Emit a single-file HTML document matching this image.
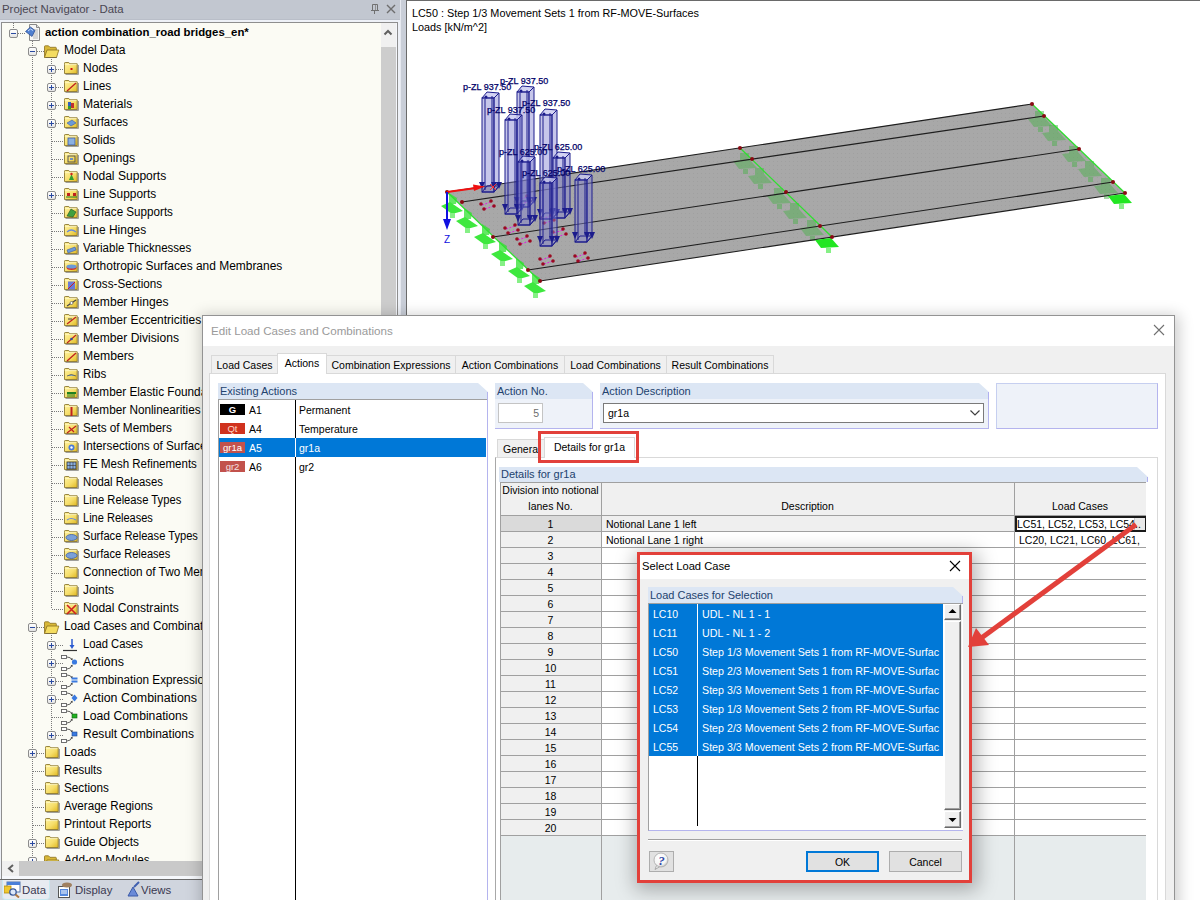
<!DOCTYPE html>
<html><head><meta charset="utf-8"><style>
html,body{margin:0;padding:0;}
body{width:1200px;height:900px;position:relative;overflow:hidden;background:#fff;font-family:"Liberation Sans", sans-serif;}
.t{position:absolute;white-space:nowrap;font-family:"Liberation Sans", sans-serif;}
.r{position:absolute;box-sizing:border-box;}
.clip{position:absolute;overflow:hidden;}
svg{position:absolute;}
</style></head><body>
<div class="r" style="left:0px;top:0px;width:400px;height:20px;background:#c2c7d0;border-bottom:1px solid #b9bec8"></div><div class="t" style="left:2px;top:4.35px;font-size:11.4px;line-height:11.4px;color:#4a4652;font-weight:400;">Project Navigator - Data</div><svg style="left:370px;top:3px" width="10" height="12"><path d="M2.5 1.5H7.5V7.5H2.5Z" fill="none" stroke="#707070"/><path d="M5.5 2V7" stroke="#909090"/><path d="M1 7.5H9" stroke="#707070"/><path d="M4.5 8V11" stroke="#707070"/></svg><svg style="left:386px;top:4px" width="10" height="10"><path d="M1 1L9 9M9 1L1 9" stroke="#6e6e6e" stroke-width="1.4"/></svg><div class="r" style="left:0px;top:20px;width:400px;height:860px;background:#eef1f7"></div><div class="r" style="left:1px;top:22px;width:397px;height:858px;border:1px solid #8e8e8e;background:#fbfbf4"></div><div class="r" style="left:381px;top:23px;width:15px;height:24px;background:#f0f0f0"></div><svg style="left:382px;top:27px" width="12" height="10"><path d="M2.5 7.5L6 4L9.5 7.5" stroke="#606060" stroke-width="2" fill="none"/></svg><div class="r" style="left:381px;top:47px;width:15px;height:813px;background:#cdcdcd"></div><div class="r" style="left:396px;top:23px;width:1px;height:856px;background:#f4f6fb"></div><div class="r" style="left:400px;top:0px;width:6px;height:900px;background:#c9ced8;border-left:1px solid #e6e9f0"></div><div class="r" style="left:2px;top:861px;width:379px;height:15px;background:#c9c9c9"></div><div class="r" style="left:2px;top:861px;width:17px;height:15px;background:#f0f0f0"></div><svg style="left:6px;top:863px" width="10" height="11"><path d="M7 2L3 5.5L7 9" stroke="#606060" stroke-width="2" fill="none"/></svg><div class="r" style="left:381px;top:861px;width:15px;height:15px;background:#f0f0f0"></div><div class="r" style="left:2px;top:876px;width:395px;height:3px;background:#f6f8fc"></div><div class="r" style="left:0px;top:879px;width:400px;height:21px;background:#d0d5de;border-top:1px solid #6a6a6a"></div><div class="r" style="left:2px;top:880px;width:48px;height:20px;background:#e8ebf1;border:1px solid #c8e8f0;border-top:none;border-radius:0 0 4px 4px"></div><svg style="left:4px;top:881px" width="17" height="17"><rect x="3" y="1" width="13" height="10" fill="#fff" stroke="#5577aa"/><rect x="3" y="1" width="13" height="3" fill="#4a7fd8"/><rect x="0" y="5" width="7" height="7" fill="#f0c830" stroke="#b08a10" stroke-width="0.8"/><circle cx="9" cy="11" r="3.2" fill="#dde8f8" stroke="#3a5a9a" stroke-width="1.3"/><path d="M11.5 13.5L15 16.5" stroke="#b07840" stroke-width="2"/></svg><div class="t" style="left:22px;top:885.35px;font-size:11.4px;line-height:11.4px;color:#3a3850;font-weight:400;">Data</div><svg style="left:57px;top:881px" width="17" height="17"><rect x="1.5" y="5.5" width="11" height="11" fill="#fff" stroke="#555"/><rect x="3" y="8" width="8" height="7" fill="#5588dd"/><path d="M4 10h6M4 12h6" stroke="#fff"/><ellipse cx="10" cy="4" rx="5" ry="2.5" fill="#a08060"/></svg><div class="t" style="left:75px;top:885.35px;font-size:11.4px;line-height:11.4px;color:#3a3850;font-weight:400;">Display</div><svg style="left:125px;top:881px" width="17" height="17"><path d="M3 15L8 6L13 15Z" fill="#6a8ad8" stroke="#3a5aa8"/><path d="M9 6L14 1" stroke="#4060b0" stroke-width="2"/></svg><div class="t" style="left:141px;top:885.35px;font-size:11.4px;line-height:11.4px;color:#3a3850;font-weight:400;">Views</div><div class="clip" style="left:2px;top:23px;width:379px;height:838px"><div style="position:absolute;left:-2px;top:-23px;width:400px;height:900px"><div class="r" style="left:13px;top:23px;width:1px;height:6px;background:repeating-linear-gradient(#7a7a7a 0 1px,transparent 1px 2px)"></div><div class="r" style="left:32px;top:41px;width:1px;height:820px;background:repeating-linear-gradient(#7a7a7a 0 1px,transparent 1px 2px)"></div><div class="r" style="left:51px;top:59px;width:1px;height:550px;background:repeating-linear-gradient(#7a7a7a 0 1px,transparent 1px 2px)"></div><div class="r" style="left:51px;top:653px;width:1px;height:81px;background:repeating-linear-gradient(#7a7a7a 0 1px,transparent 1px 2px)"></div><div class="r" style="left:51px;top:635px;width:1px;height:18px;background:repeating-linear-gradient(#7a7a7a 0 1px,transparent 1px 2px)"></div><div class="r" style="left:14px;top:33px;width:11px;height:1px;background:repeating-linear-gradient(90deg,#7a7a7a 0 1px,transparent 1px 2px)"></div><div class="r" style="left:9px;top:29px;width:9px;height:9px;border:1px solid #8c8c8c;border-radius:2px;background:linear-gradient(#fff,#e4e4e4)"></div><div class="r" style="left:11px;top:33px;width:5px;height:1px;background:#2a4aa0"></div><svg style="left:25px;top:24px" width="17" height="17"><path d="M4.5 0.5H11.5L14.5 3.5V16.5H4.5Z" fill="#f6f6f6" stroke="#8a8a8a"/><path d="M11.5 0.5V3.5H14.5" fill="#e0e0e0" stroke="#8a8a8a"/><path d="M8 6h5M8 8h5M8 10h5M8 12h5M8 14h5" stroke="#b4b4b4"/><path d="M0.5 7.5L5.5 3L10 6.5L7 12.5Z" fill="#4f7fd0" stroke="#2a4a90" stroke-width="0.7"/><path d="M3 7L5.5 5L8 6.5" stroke="#d8e6ff" stroke-width="0.9" fill="none"/></svg><div class="t" style="left:45px;top:25.84px;font-size:12px;line-height:12px;color:#000;font-weight:400;"><b style="font-size:11.4px">action combination_road bridges_en*</b></div><div class="r" style="left:33px;top:51px;width:11px;height:1px;background:repeating-linear-gradient(90deg,#7a7a7a 0 1px,transparent 1px 2px)"></div><div class="r" style="left:28px;top:47px;width:9px;height:9px;border:1px solid #8c8c8c;border-radius:2px;background:linear-gradient(#fff,#e4e4e4)"></div><div class="r" style="left:30px;top:51px;width:5px;height:1px;background:#2a4aa0"></div><svg style="left:43px;top:45px" width="17" height="13" viewBox="0 0 17 13"><path d="M1.5 12.5V1.5Q1.5 0.8 2.2 0.8H5.5L7 2.3H12.5Q13.3 2.3 13.3 3V5" fill="#d8b838" stroke="#8a7020" stroke-width="0.8"/><path d="M1.5 12.5L4 5H15.8L13.5 12.5Z" fill="#f4dc60" stroke="#8a7020" stroke-width="0.8"/><path d="M2.5 12.8H14" stroke="#404040" stroke-opacity="0.5"/></svg><div class="t" style="left:64px;top:43.84px;font-size:12px;line-height:12px;color:#000;font-weight:400;transform:scaleX(1.002);transform-origin:0 0">Model Data</div><div class="r" style="left:52px;top:69px;width:11px;height:1px;background:repeating-linear-gradient(90deg,#7a7a7a 0 1px,transparent 1px 2px)"></div><div class="r" style="left:47px;top:65px;width:9px;height:9px;border:1px solid #8c8c8c;border-radius:2px;background:linear-gradient(#fff,#e4e4e4)"></div><div class="r" style="left:49px;top:69px;width:5px;height:1px;background:#2a4aa0"></div><div class="r" style="left:51px;top:67px;width:1px;height:5px;background:#2a4aa0"></div><svg style="left:64px;top:62px" width="15" height="13" viewBox="0 0 15 13"><defs><linearGradient id="fg" x1="0" y1="0" x2="1" y2="1"><stop offset="0" stop-color="#fff3a0"/><stop offset="0.55" stop-color="#f6de6a"/><stop offset="1" stop-color="#e0b820"/></linearGradient></defs><path d="M1.5 12.2H14.2V3" stroke="#303030" stroke-opacity="0.6" stroke-width="1.1" fill="none"/><path d="M0.5 2.5V1.2Q0.5 0.5 1.2 0.5H4.8L5.8 1.8H13.2V11.5H0.5Z" fill="url(#fg)" stroke="#8c7830" stroke-width="0.9"/><path d="M1.2 2.6H12.6" stroke="#fff8c8" stroke-width="0.8"/><rect x="6.5" y="6" width="2" height="2" fill="#d01010"/></svg><div class="t" style="left:83px;top:61.84px;font-size:12px;line-height:12px;color:#000;font-weight:400;transform:scaleX(1.006);transform-origin:0 0">Nodes</div><div class="r" style="left:52px;top:87px;width:11px;height:1px;background:repeating-linear-gradient(90deg,#7a7a7a 0 1px,transparent 1px 2px)"></div><div class="r" style="left:47px;top:83px;width:9px;height:9px;border:1px solid #8c8c8c;border-radius:2px;background:linear-gradient(#fff,#e4e4e4)"></div><div class="r" style="left:49px;top:87px;width:5px;height:1px;background:#2a4aa0"></div><div class="r" style="left:51px;top:85px;width:1px;height:5px;background:#2a4aa0"></div><svg style="left:64px;top:80px" width="15" height="13" viewBox="0 0 15 13"><defs><linearGradient id="fg" x1="0" y1="0" x2="1" y2="1"><stop offset="0" stop-color="#fff3a0"/><stop offset="0.55" stop-color="#f6de6a"/><stop offset="1" stop-color="#e0b820"/></linearGradient></defs><path d="M1.5 12.2H14.2V3" stroke="#303030" stroke-opacity="0.6" stroke-width="1.1" fill="none"/><path d="M0.5 2.5V1.2Q0.5 0.5 1.2 0.5H4.8L5.8 1.8H13.2V11.5H0.5Z" fill="url(#fg)" stroke="#8c7830" stroke-width="0.9"/><path d="M1.2 2.6H12.6" stroke="#fff8c8" stroke-width="0.8"/><path d="M3 11L12 3" stroke="#c02020" stroke-width="1.3"/></svg><div class="t" style="left:83px;top:79.84px;font-size:12px;line-height:12px;color:#000;font-weight:400;transform:scaleX(0.983);transform-origin:0 0">Lines</div><div class="r" style="left:52px;top:105px;width:11px;height:1px;background:repeating-linear-gradient(90deg,#7a7a7a 0 1px,transparent 1px 2px)"></div><div class="r" style="left:47px;top:101px;width:9px;height:9px;border:1px solid #8c8c8c;border-radius:2px;background:linear-gradient(#fff,#e4e4e4)"></div><div class="r" style="left:49px;top:105px;width:5px;height:1px;background:#2a4aa0"></div><div class="r" style="left:51px;top:103px;width:1px;height:5px;background:#2a4aa0"></div><svg style="left:64px;top:98px" width="15" height="13" viewBox="0 0 15 13"><defs><linearGradient id="fg" x1="0" y1="0" x2="1" y2="1"><stop offset="0" stop-color="#fff3a0"/><stop offset="0.55" stop-color="#f6de6a"/><stop offset="1" stop-color="#e0b820"/></linearGradient></defs><path d="M1.5 12.2H14.2V3" stroke="#303030" stroke-opacity="0.6" stroke-width="1.1" fill="none"/><path d="M0.5 2.5V1.2Q0.5 0.5 1.2 0.5H4.8L5.8 1.8H13.2V11.5H0.5Z" fill="url(#fg)" stroke="#8c7830" stroke-width="0.9"/><path d="M1.2 2.6H12.6" stroke="#fff8c8" stroke-width="0.8"/><rect x="4" y="4" width="3" height="4" fill="#3060c0"/><rect x="7" y="5" width="3" height="5" fill="#c03030"/><rect x="4" y="8" width="3" height="3" fill="#30a030"/></svg><div class="t" style="left:83px;top:97.84px;font-size:12px;line-height:12px;color:#000;font-weight:400;transform:scaleX(1.011);transform-origin:0 0">Materials</div><div class="r" style="left:52px;top:123px;width:11px;height:1px;background:repeating-linear-gradient(90deg,#7a7a7a 0 1px,transparent 1px 2px)"></div><div class="r" style="left:47px;top:119px;width:9px;height:9px;border:1px solid #8c8c8c;border-radius:2px;background:linear-gradient(#fff,#e4e4e4)"></div><div class="r" style="left:49px;top:123px;width:5px;height:1px;background:#2a4aa0"></div><div class="r" style="left:51px;top:121px;width:1px;height:5px;background:#2a4aa0"></div><svg style="left:64px;top:116px" width="15" height="13" viewBox="0 0 15 13"><defs><linearGradient id="fg" x1="0" y1="0" x2="1" y2="1"><stop offset="0" stop-color="#fff3a0"/><stop offset="0.55" stop-color="#f6de6a"/><stop offset="1" stop-color="#e0b820"/></linearGradient></defs><path d="M1.5 12.2H14.2V3" stroke="#303030" stroke-opacity="0.6" stroke-width="1.1" fill="none"/><path d="M0.5 2.5V1.2Q0.5 0.5 1.2 0.5H4.8L5.8 1.8H13.2V11.5H0.5Z" fill="url(#fg)" stroke="#8c7830" stroke-width="0.9"/><path d="M1.2 2.6H12.6" stroke="#fff8c8" stroke-width="0.8"/><path d="M3 7L8 4L12 7L7 10Z" fill="#6a9ad8" stroke="#3a5aa8" stroke-width="0.6"/></svg><div class="t" style="left:83px;top:115.84px;font-size:12px;line-height:12px;color:#000;font-weight:400;transform:scaleX(0.948);transform-origin:0 0">Surfaces</div><div class="r" style="left:52px;top:141px;width:11px;height:1px;background:repeating-linear-gradient(90deg,#7a7a7a 0 1px,transparent 1px 2px)"></div><svg style="left:64px;top:134px" width="15" height="13" viewBox="0 0 15 13"><defs><linearGradient id="fg" x1="0" y1="0" x2="1" y2="1"><stop offset="0" stop-color="#fff3a0"/><stop offset="0.55" stop-color="#f6de6a"/><stop offset="1" stop-color="#e0b820"/></linearGradient></defs><path d="M1.5 12.2H14.2V3" stroke="#303030" stroke-opacity="0.6" stroke-width="1.1" fill="none"/><path d="M0.5 2.5V1.2Q0.5 0.5 1.2 0.5H4.8L5.8 1.8H13.2V11.5H0.5Z" fill="url(#fg)" stroke="#8c7830" stroke-width="0.9"/><path d="M1.2 2.6H12.6" stroke="#fff8c8" stroke-width="0.8"/><rect x="4" y="4" width="7" height="7" fill="#8ab0e0" stroke="#3a5aa8" stroke-width="0.8"/></svg><div class="t" style="left:83px;top:133.84px;font-size:12px;line-height:12px;color:#000;font-weight:400;transform:scaleX(0.985);transform-origin:0 0">Solids</div><div class="r" style="left:52px;top:159px;width:11px;height:1px;background:repeating-linear-gradient(90deg,#7a7a7a 0 1px,transparent 1px 2px)"></div><svg style="left:64px;top:152px" width="15" height="13" viewBox="0 0 15 13"><defs><linearGradient id="fg" x1="0" y1="0" x2="1" y2="1"><stop offset="0" stop-color="#fff3a0"/><stop offset="0.55" stop-color="#f6de6a"/><stop offset="1" stop-color="#e0b820"/></linearGradient></defs><path d="M1.5 12.2H14.2V3" stroke="#303030" stroke-opacity="0.6" stroke-width="1.1" fill="none"/><path d="M0.5 2.5V1.2Q0.5 0.5 1.2 0.5H4.8L5.8 1.8H13.2V11.5H0.5Z" fill="url(#fg)" stroke="#8c7830" stroke-width="0.9"/><path d="M1.2 2.6H12.6" stroke="#fff8c8" stroke-width="0.8"/><rect x="4" y="4" width="7" height="6" fill="none" stroke="#555" stroke-width="1"/><rect x="6" y="6" width="3" height="2" fill="#7090c0"/></svg><div class="t" style="left:83px;top:151.84px;font-size:12px;line-height:12px;color:#000;font-weight:400;transform:scaleX(1.016);transform-origin:0 0">Openings</div><div class="r" style="left:52px;top:177px;width:11px;height:1px;background:repeating-linear-gradient(90deg,#7a7a7a 0 1px,transparent 1px 2px)"></div><svg style="left:64px;top:170px" width="15" height="13" viewBox="0 0 15 13"><defs><linearGradient id="fg" x1="0" y1="0" x2="1" y2="1"><stop offset="0" stop-color="#fff3a0"/><stop offset="0.55" stop-color="#f6de6a"/><stop offset="1" stop-color="#e0b820"/></linearGradient></defs><path d="M1.5 12.2H14.2V3" stroke="#303030" stroke-opacity="0.6" stroke-width="1.1" fill="none"/><path d="M0.5 2.5V1.2Q0.5 0.5 1.2 0.5H4.8L5.8 1.8H13.2V11.5H0.5Z" fill="url(#fg)" stroke="#8c7830" stroke-width="0.9"/><path d="M1.2 2.6H12.6" stroke="#fff8c8" stroke-width="0.8"/><path d="M7.5 4L5 10H10Z" fill="#30a030"/><circle cx="7.5" cy="4" r="1.2" fill="#d02020"/></svg><div class="t" style="left:83px;top:169.84px;font-size:12px;line-height:12px;color:#000;font-weight:400;transform:scaleX(1.006);transform-origin:0 0">Nodal Supports</div><div class="r" style="left:52px;top:195px;width:11px;height:1px;background:repeating-linear-gradient(90deg,#7a7a7a 0 1px,transparent 1px 2px)"></div><div class="r" style="left:47px;top:191px;width:9px;height:9px;border:1px solid #8c8c8c;border-radius:2px;background:linear-gradient(#fff,#e4e4e4)"></div><div class="r" style="left:49px;top:195px;width:5px;height:1px;background:#2a4aa0"></div><div class="r" style="left:51px;top:193px;width:1px;height:5px;background:#2a4aa0"></div><svg style="left:64px;top:188px" width="15" height="13" viewBox="0 0 15 13"><defs><linearGradient id="fg" x1="0" y1="0" x2="1" y2="1"><stop offset="0" stop-color="#fff3a0"/><stop offset="0.55" stop-color="#f6de6a"/><stop offset="1" stop-color="#e0b820"/></linearGradient></defs><path d="M1.5 12.2H14.2V3" stroke="#303030" stroke-opacity="0.6" stroke-width="1.1" fill="none"/><path d="M0.5 2.5V1.2Q0.5 0.5 1.2 0.5H4.8L5.8 1.8H13.2V11.5H0.5Z" fill="url(#fg)" stroke="#8c7830" stroke-width="0.9"/><path d="M1.2 2.6H12.6" stroke="#fff8c8" stroke-width="0.8"/><path d="M2 9h11" stroke="#208020"/><rect x="3" y="5" width="3" height="3" fill="#c02020"/><rect x="9" y="5" width="3" height="3" fill="#c02020"/></svg><div class="t" style="left:83px;top:187.84px;font-size:12px;line-height:12px;color:#000;font-weight:400;transform:scaleX(0.988);transform-origin:0 0">Line Supports</div><div class="r" style="left:52px;top:213px;width:11px;height:1px;background:repeating-linear-gradient(90deg,#7a7a7a 0 1px,transparent 1px 2px)"></div><svg style="left:64px;top:206px" width="15" height="13" viewBox="0 0 15 13"><defs><linearGradient id="fg" x1="0" y1="0" x2="1" y2="1"><stop offset="0" stop-color="#fff3a0"/><stop offset="0.55" stop-color="#f6de6a"/><stop offset="1" stop-color="#e0b820"/></linearGradient></defs><path d="M1.5 12.2H14.2V3" stroke="#303030" stroke-opacity="0.6" stroke-width="1.1" fill="none"/><path d="M0.5 2.5V1.2Q0.5 0.5 1.2 0.5H4.8L5.8 1.8H13.2V11.5H0.5Z" fill="url(#fg)" stroke="#8c7830" stroke-width="0.9"/><path d="M1.2 2.6H12.6" stroke="#fff8c8" stroke-width="0.8"/><path d="M3 10L7 3L12 6L9 11Z" fill="#40a040" stroke="#205020" stroke-width="0.6"/></svg><div class="t" style="left:83px;top:205.84px;font-size:12px;line-height:12px;color:#000;font-weight:400;transform:scaleX(0.970);transform-origin:0 0">Surface Supports</div><div class="r" style="left:52px;top:231px;width:11px;height:1px;background:repeating-linear-gradient(90deg,#7a7a7a 0 1px,transparent 1px 2px)"></div><svg style="left:64px;top:224px" width="15" height="13" viewBox="0 0 15 13"><defs><linearGradient id="fg" x1="0" y1="0" x2="1" y2="1"><stop offset="0" stop-color="#fff3a0"/><stop offset="0.55" stop-color="#f6de6a"/><stop offset="1" stop-color="#e0b820"/></linearGradient></defs><path d="M1.5 12.2H14.2V3" stroke="#303030" stroke-opacity="0.6" stroke-width="1.1" fill="none"/><path d="M0.5 2.5V1.2Q0.5 0.5 1.2 0.5H4.8L5.8 1.8H13.2V11.5H0.5Z" fill="url(#fg)" stroke="#8c7830" stroke-width="0.9"/><path d="M1.2 2.6H12.6" stroke="#fff8c8" stroke-width="0.8"/><path d="M3 8Q7 4 12 8" stroke="#6a8ad8" fill="none" stroke-width="1.2"/></svg><div class="t" style="left:83px;top:223.84px;font-size:12px;line-height:12px;color:#000;font-weight:400;transform:scaleX(0.997);transform-origin:0 0">Line Hinges</div><div class="r" style="left:52px;top:249px;width:11px;height:1px;background:repeating-linear-gradient(90deg,#7a7a7a 0 1px,transparent 1px 2px)"></div><svg style="left:64px;top:242px" width="15" height="13" viewBox="0 0 15 13"><defs><linearGradient id="fg" x1="0" y1="0" x2="1" y2="1"><stop offset="0" stop-color="#fff3a0"/><stop offset="0.55" stop-color="#f6de6a"/><stop offset="1" stop-color="#e0b820"/></linearGradient></defs><path d="M1.5 12.2H14.2V3" stroke="#303030" stroke-opacity="0.6" stroke-width="1.1" fill="none"/><path d="M0.5 2.5V1.2Q0.5 0.5 1.2 0.5H4.8L5.8 1.8H13.2V11.5H0.5Z" fill="url(#fg)" stroke="#8c7830" stroke-width="0.9"/><path d="M1.2 2.6H12.6" stroke="#fff8c8" stroke-width="0.8"/><path d="M3 8L11 5L12 8L4 11Z" fill="#6a9ad8" stroke="#3a5aa8" stroke-width="0.6"/></svg><div class="t" style="left:83px;top:241.84px;font-size:12px;line-height:12px;color:#000;font-weight:400;transform:scaleX(0.958);transform-origin:0 0">Variable Thicknesses</div><div class="r" style="left:52px;top:267px;width:11px;height:1px;background:repeating-linear-gradient(90deg,#7a7a7a 0 1px,transparent 1px 2px)"></div><svg style="left:64px;top:260px" width="15" height="13" viewBox="0 0 15 13"><defs><linearGradient id="fg" x1="0" y1="0" x2="1" y2="1"><stop offset="0" stop-color="#fff3a0"/><stop offset="0.55" stop-color="#f6de6a"/><stop offset="1" stop-color="#e0b820"/></linearGradient></defs><path d="M1.5 12.2H14.2V3" stroke="#303030" stroke-opacity="0.6" stroke-width="1.1" fill="none"/><path d="M0.5 2.5V1.2Q0.5 0.5 1.2 0.5H4.8L5.8 1.8H13.2V11.5H0.5Z" fill="url(#fg)" stroke="#8c7830" stroke-width="0.9"/><path d="M1.2 2.6H12.6" stroke="#fff8c8" stroke-width="0.8"/><ellipse cx="7.5" cy="7.5" rx="5" ry="2.5" fill="#d03030"/><ellipse cx="7.5" cy="6.5" rx="5" ry="2" fill="#6a9ad8"/></svg><div class="t" style="left:83px;top:259.84px;font-size:12px;line-height:12px;color:#000;font-weight:400;transform:scaleX(0.996);transform-origin:0 0">Orthotropic Surfaces and Membranes</div><div class="r" style="left:52px;top:285px;width:11px;height:1px;background:repeating-linear-gradient(90deg,#7a7a7a 0 1px,transparent 1px 2px)"></div><svg style="left:64px;top:278px" width="15" height="13" viewBox="0 0 15 13"><defs><linearGradient id="fg" x1="0" y1="0" x2="1" y2="1"><stop offset="0" stop-color="#fff3a0"/><stop offset="0.55" stop-color="#f6de6a"/><stop offset="1" stop-color="#e0b820"/></linearGradient></defs><path d="M1.5 12.2H14.2V3" stroke="#303030" stroke-opacity="0.6" stroke-width="1.1" fill="none"/><path d="M0.5 2.5V1.2Q0.5 0.5 1.2 0.5H4.8L5.8 1.8H13.2V11.5H0.5Z" fill="url(#fg)" stroke="#8c7830" stroke-width="0.9"/><path d="M1.2 2.6H12.6" stroke="#fff8c8" stroke-width="0.8"/><rect x="4" y="3.5" width="7" height="8" fill="#6a7ad8"/><path d="M4 11L11 4" stroke="#d02020"/></svg><div class="t" style="left:83px;top:277.84px;font-size:12px;line-height:12px;color:#000;font-weight:400;transform:scaleX(0.973);transform-origin:0 0">Cross-Sections</div><div class="r" style="left:52px;top:303px;width:11px;height:1px;background:repeating-linear-gradient(90deg,#7a7a7a 0 1px,transparent 1px 2px)"></div><svg style="left:64px;top:296px" width="15" height="13" viewBox="0 0 15 13"><defs><linearGradient id="fg" x1="0" y1="0" x2="1" y2="1"><stop offset="0" stop-color="#fff3a0"/><stop offset="0.55" stop-color="#f6de6a"/><stop offset="1" stop-color="#e0b820"/></linearGradient></defs><path d="M1.5 12.2H14.2V3" stroke="#303030" stroke-opacity="0.6" stroke-width="1.1" fill="none"/><path d="M0.5 2.5V1.2Q0.5 0.5 1.2 0.5H4.8L5.8 1.8H13.2V11.5H0.5Z" fill="url(#fg)" stroke="#8c7830" stroke-width="0.9"/><path d="M1.2 2.6H12.6" stroke="#fff8c8" stroke-width="0.8"/><path d="M3 10L12 4" stroke="#444" stroke-width="1.2"/><circle cx="7.5" cy="7" r="1.5" fill="#fff" stroke="#444" stroke-width="0.6"/></svg><div class="t" style="left:83px;top:295.84px;font-size:12px;line-height:12px;color:#000;font-weight:400;transform:scaleX(1.009);transform-origin:0 0">Member Hinges</div><div class="r" style="left:52px;top:321px;width:11px;height:1px;background:repeating-linear-gradient(90deg,#7a7a7a 0 1px,transparent 1px 2px)"></div><svg style="left:64px;top:314px" width="15" height="13" viewBox="0 0 15 13"><defs><linearGradient id="fg" x1="0" y1="0" x2="1" y2="1"><stop offset="0" stop-color="#fff3a0"/><stop offset="0.55" stop-color="#f6de6a"/><stop offset="1" stop-color="#e0b820"/></linearGradient></defs><path d="M1.5 12.2H14.2V3" stroke="#303030" stroke-opacity="0.6" stroke-width="1.1" fill="none"/><path d="M0.5 2.5V1.2Q0.5 0.5 1.2 0.5H4.8L5.8 1.8H13.2V11.5H0.5Z" fill="url(#fg)" stroke="#8c7830" stroke-width="0.9"/><path d="M1.2 2.6H12.6" stroke="#fff8c8" stroke-width="0.8"/><path d="M3 10L12 3" stroke="#c02020" stroke-width="1.2"/><path d="M4 5h4" stroke="#444"/></svg><div class="t" style="left:83px;top:313.84px;font-size:12px;line-height:12px;color:#000;font-weight:400;transform:scaleX(1.001);transform-origin:0 0">Member Eccentricities</div><div class="r" style="left:52px;top:339px;width:11px;height:1px;background:repeating-linear-gradient(90deg,#7a7a7a 0 1px,transparent 1px 2px)"></div><svg style="left:64px;top:332px" width="15" height="13" viewBox="0 0 15 13"><defs><linearGradient id="fg" x1="0" y1="0" x2="1" y2="1"><stop offset="0" stop-color="#fff3a0"/><stop offset="0.55" stop-color="#f6de6a"/><stop offset="1" stop-color="#e0b820"/></linearGradient></defs><path d="M1.5 12.2H14.2V3" stroke="#303030" stroke-opacity="0.6" stroke-width="1.1" fill="none"/><path d="M0.5 2.5V1.2Q0.5 0.5 1.2 0.5H4.8L5.8 1.8H13.2V11.5H0.5Z" fill="url(#fg)" stroke="#8c7830" stroke-width="0.9"/><path d="M1.2 2.6H12.6" stroke="#fff8c8" stroke-width="0.8"/><path d="M3 11L12 3" stroke="#c02020" stroke-width="1.2"/><circle cx="7.5" cy="7" r="1.3" fill="#3050a0"/></svg><div class="t" style="left:83px;top:331.84px;font-size:12px;line-height:12px;color:#000;font-weight:400;transform:scaleX(1.006);transform-origin:0 0">Member Divisions</div><div class="r" style="left:52px;top:357px;width:11px;height:1px;background:repeating-linear-gradient(90deg,#7a7a7a 0 1px,transparent 1px 2px)"></div><svg style="left:64px;top:350px" width="15" height="13" viewBox="0 0 15 13"><defs><linearGradient id="fg" x1="0" y1="0" x2="1" y2="1"><stop offset="0" stop-color="#fff3a0"/><stop offset="0.55" stop-color="#f6de6a"/><stop offset="1" stop-color="#e0b820"/></linearGradient></defs><path d="M1.5 12.2H14.2V3" stroke="#303030" stroke-opacity="0.6" stroke-width="1.1" fill="none"/><path d="M0.5 2.5V1.2Q0.5 0.5 1.2 0.5H4.8L5.8 1.8H13.2V11.5H0.5Z" fill="url(#fg)" stroke="#8c7830" stroke-width="0.9"/><path d="M1.2 2.6H12.6" stroke="#fff8c8" stroke-width="0.8"/><path d="M3 11L12 3" stroke="#c02020" stroke-width="1.3"/></svg><div class="t" style="left:83px;top:349.84px;font-size:12px;line-height:12px;color:#000;font-weight:400;transform:scaleX(1.018);transform-origin:0 0">Members</div><div class="r" style="left:52px;top:375px;width:11px;height:1px;background:repeating-linear-gradient(90deg,#7a7a7a 0 1px,transparent 1px 2px)"></div><svg style="left:64px;top:368px" width="15" height="13" viewBox="0 0 15 13"><defs><linearGradient id="fg" x1="0" y1="0" x2="1" y2="1"><stop offset="0" stop-color="#fff3a0"/><stop offset="0.55" stop-color="#f6de6a"/><stop offset="1" stop-color="#e0b820"/></linearGradient></defs><path d="M1.5 12.2H14.2V3" stroke="#303030" stroke-opacity="0.6" stroke-width="1.1" fill="none"/><path d="M0.5 2.5V1.2Q0.5 0.5 1.2 0.5H4.8L5.8 1.8H13.2V11.5H0.5Z" fill="url(#fg)" stroke="#8c7830" stroke-width="0.9"/><path d="M1.2 2.6H12.6" stroke="#fff8c8" stroke-width="0.8"/><path d="M3 8Q7 5 12 8" stroke="#555" fill="#8ab" stroke-width="0.8"/></svg><div class="t" style="left:83px;top:367.84px;font-size:12px;line-height:12px;color:#000;font-weight:400;transform:scaleX(0.966);transform-origin:0 0">Ribs</div><div class="r" style="left:52px;top:393px;width:11px;height:1px;background:repeating-linear-gradient(90deg,#7a7a7a 0 1px,transparent 1px 2px)"></div><svg style="left:64px;top:386px" width="15" height="13" viewBox="0 0 15 13"><defs><linearGradient id="fg" x1="0" y1="0" x2="1" y2="1"><stop offset="0" stop-color="#fff3a0"/><stop offset="0.55" stop-color="#f6de6a"/><stop offset="1" stop-color="#e0b820"/></linearGradient></defs><path d="M1.5 12.2H14.2V3" stroke="#303030" stroke-opacity="0.6" stroke-width="1.1" fill="none"/><path d="M0.5 2.5V1.2Q0.5 0.5 1.2 0.5H4.8L5.8 1.8H13.2V11.5H0.5Z" fill="url(#fg)" stroke="#8c7830" stroke-width="0.9"/><path d="M1.2 2.6H12.6" stroke="#fff8c8" stroke-width="0.8"/><path d="M3 7h9" stroke="#208020" stroke-width="2"/><path d="M4 8v3M6 8v3M8 8v3M10 8v3" stroke="#208020"/></svg><div class="t" style="left:83px;top:385.84px;font-size:12px;line-height:12px;color:#000;font-weight:400;transform:scaleX(0.980);transform-origin:0 0">Member Elastic Foundations</div><div class="r" style="left:52px;top:411px;width:11px;height:1px;background:repeating-linear-gradient(90deg,#7a7a7a 0 1px,transparent 1px 2px)"></div><svg style="left:64px;top:404px" width="15" height="13" viewBox="0 0 15 13"><defs><linearGradient id="fg" x1="0" y1="0" x2="1" y2="1"><stop offset="0" stop-color="#fff3a0"/><stop offset="0.55" stop-color="#f6de6a"/><stop offset="1" stop-color="#e0b820"/></linearGradient></defs><path d="M1.5 12.2H14.2V3" stroke="#303030" stroke-opacity="0.6" stroke-width="1.1" fill="none"/><path d="M0.5 2.5V1.2Q0.5 0.5 1.2 0.5H4.8L5.8 1.8H13.2V11.5H0.5Z" fill="url(#fg)" stroke="#8c7830" stroke-width="0.9"/><path d="M1.2 2.6H12.6" stroke="#fff8c8" stroke-width="0.8"/><path d="M7.5 3v9" stroke="#c02020" stroke-width="2"/></svg><div class="t" style="left:83px;top:403.84px;font-size:12px;line-height:12px;color:#000;font-weight:400;transform:scaleX(0.980);transform-origin:0 0">Member Nonlinearities</div><div class="r" style="left:52px;top:429px;width:11px;height:1px;background:repeating-linear-gradient(90deg,#7a7a7a 0 1px,transparent 1px 2px)"></div><svg style="left:64px;top:422px" width="15" height="13" viewBox="0 0 15 13"><defs><linearGradient id="fg" x1="0" y1="0" x2="1" y2="1"><stop offset="0" stop-color="#fff3a0"/><stop offset="0.55" stop-color="#f6de6a"/><stop offset="1" stop-color="#e0b820"/></linearGradient></defs><path d="M1.5 12.2H14.2V3" stroke="#303030" stroke-opacity="0.6" stroke-width="1.1" fill="none"/><path d="M0.5 2.5V1.2Q0.5 0.5 1.2 0.5H4.8L5.8 1.8H13.2V11.5H0.5Z" fill="url(#fg)" stroke="#8c7830" stroke-width="0.9"/><path d="M1.2 2.6H12.6" stroke="#fff8c8" stroke-width="0.8"/><path d="M3 11L12 4M5 5l5 5" stroke="#c02020" stroke-width="1.2"/></svg><div class="t" style="left:83px;top:421.84px;font-size:12px;line-height:12px;color:#000;font-weight:400;transform:scaleX(0.980);transform-origin:0 0">Sets of Members</div><div class="r" style="left:52px;top:447px;width:11px;height:1px;background:repeating-linear-gradient(90deg,#7a7a7a 0 1px,transparent 1px 2px)"></div><svg style="left:64px;top:440px" width="15" height="13" viewBox="0 0 15 13"><defs><linearGradient id="fg" x1="0" y1="0" x2="1" y2="1"><stop offset="0" stop-color="#fff3a0"/><stop offset="0.55" stop-color="#f6de6a"/><stop offset="1" stop-color="#e0b820"/></linearGradient></defs><path d="M1.5 12.2H14.2V3" stroke="#303030" stroke-opacity="0.6" stroke-width="1.1" fill="none"/><path d="M0.5 2.5V1.2Q0.5 0.5 1.2 0.5H4.8L5.8 1.8H13.2V11.5H0.5Z" fill="url(#fg)" stroke="#8c7830" stroke-width="0.9"/><path d="M1.2 2.6H12.6" stroke="#fff8c8" stroke-width="0.8"/><circle cx="7.5" cy="7.5" r="3" fill="#4a7ad8"/><circle cx="7.5" cy="7.5" r="1.2" fill="#fff"/></svg><div class="t" style="left:83px;top:439.84px;font-size:12px;line-height:12px;color:#000;font-weight:400;transform:scaleX(0.980);transform-origin:0 0">Intersections of Surfaces</div><div class="r" style="left:52px;top:465px;width:11px;height:1px;background:repeating-linear-gradient(90deg,#7a7a7a 0 1px,transparent 1px 2px)"></div><svg style="left:64px;top:458px" width="15" height="13" viewBox="0 0 15 13"><defs><linearGradient id="fg" x1="0" y1="0" x2="1" y2="1"><stop offset="0" stop-color="#fff3a0"/><stop offset="0.55" stop-color="#f6de6a"/><stop offset="1" stop-color="#e0b820"/></linearGradient></defs><path d="M1.5 12.2H14.2V3" stroke="#303030" stroke-opacity="0.6" stroke-width="1.1" fill="none"/><path d="M0.5 2.5V1.2Q0.5 0.5 1.2 0.5H4.8L5.8 1.8H13.2V11.5H0.5Z" fill="url(#fg)" stroke="#8c7830" stroke-width="0.9"/><path d="M1.2 2.6H12.6" stroke="#fff8c8" stroke-width="0.8"/><rect x="3" y="4" width="9" height="7" fill="#8ab0e0" stroke="#333" stroke-width="0.8"/><path d="M6 4v7M9 4v7M3 7.5h9" stroke="#333" stroke-width="0.6"/></svg><div class="t" style="left:83px;top:457.84px;font-size:12px;line-height:12px;color:#000;font-weight:400;transform:scaleX(0.959);transform-origin:0 0">FE Mesh Refinements</div><div class="r" style="left:52px;top:483px;width:11px;height:1px;background:repeating-linear-gradient(90deg,#7a7a7a 0 1px,transparent 1px 2px)"></div><svg style="left:64px;top:476px" width="15" height="13" viewBox="0 0 15 13"><defs><linearGradient id="fg" x1="0" y1="0" x2="1" y2="1"><stop offset="0" stop-color="#fff3a0"/><stop offset="0.55" stop-color="#f6de6a"/><stop offset="1" stop-color="#e0b820"/></linearGradient></defs><path d="M1.5 12.2H14.2V3" stroke="#303030" stroke-opacity="0.6" stroke-width="1.1" fill="none"/><path d="M0.5 2.5V1.2Q0.5 0.5 1.2 0.5H4.8L5.8 1.8H13.2V11.5H0.5Z" fill="url(#fg)" stroke="#8c7830" stroke-width="0.9"/><path d="M1.2 2.6H12.6" stroke="#fff8c8" stroke-width="0.8"/></svg><div class="t" style="left:83px;top:475.84px;font-size:12px;line-height:12px;color:#000;font-weight:400;transform:scaleX(0.943);transform-origin:0 0">Nodal Releases</div><div class="r" style="left:52px;top:501px;width:11px;height:1px;background:repeating-linear-gradient(90deg,#7a7a7a 0 1px,transparent 1px 2px)"></div><svg style="left:64px;top:494px" width="15" height="13" viewBox="0 0 15 13"><defs><linearGradient id="fg" x1="0" y1="0" x2="1" y2="1"><stop offset="0" stop-color="#fff3a0"/><stop offset="0.55" stop-color="#f6de6a"/><stop offset="1" stop-color="#e0b820"/></linearGradient></defs><path d="M1.5 12.2H14.2V3" stroke="#303030" stroke-opacity="0.6" stroke-width="1.1" fill="none"/><path d="M0.5 2.5V1.2Q0.5 0.5 1.2 0.5H4.8L5.8 1.8H13.2V11.5H0.5Z" fill="url(#fg)" stroke="#8c7830" stroke-width="0.9"/><path d="M1.2 2.6H12.6" stroke="#fff8c8" stroke-width="0.8"/></svg><div class="t" style="left:83px;top:493.84px;font-size:12px;line-height:12px;color:#000;font-weight:400;transform:scaleX(0.934);transform-origin:0 0">Line Release Types</div><div class="r" style="left:52px;top:519px;width:11px;height:1px;background:repeating-linear-gradient(90deg,#7a7a7a 0 1px,transparent 1px 2px)"></div><svg style="left:64px;top:512px" width="15" height="13" viewBox="0 0 15 13"><defs><linearGradient id="fg" x1="0" y1="0" x2="1" y2="1"><stop offset="0" stop-color="#fff3a0"/><stop offset="0.55" stop-color="#f6de6a"/><stop offset="1" stop-color="#e0b820"/></linearGradient></defs><path d="M1.5 12.2H14.2V3" stroke="#303030" stroke-opacity="0.6" stroke-width="1.1" fill="none"/><path d="M0.5 2.5V1.2Q0.5 0.5 1.2 0.5H4.8L5.8 1.8H13.2V11.5H0.5Z" fill="url(#fg)" stroke="#8c7830" stroke-width="0.9"/><path d="M1.2 2.6H12.6" stroke="#fff8c8" stroke-width="0.8"/><path d="M3 8Q7 5 12 8" stroke="#6a8ad8" fill="none" stroke-width="1.2"/></svg><div class="t" style="left:83px;top:511.84px;font-size:12px;line-height:12px;color:#000;font-weight:400;transform:scaleX(0.919);transform-origin:0 0">Line Releases</div><div class="r" style="left:52px;top:537px;width:11px;height:1px;background:repeating-linear-gradient(90deg,#7a7a7a 0 1px,transparent 1px 2px)"></div><svg style="left:64px;top:530px" width="15" height="13" viewBox="0 0 15 13"><defs><linearGradient id="fg" x1="0" y1="0" x2="1" y2="1"><stop offset="0" stop-color="#fff3a0"/><stop offset="0.55" stop-color="#f6de6a"/><stop offset="1" stop-color="#e0b820"/></linearGradient></defs><path d="M1.5 12.2H14.2V3" stroke="#303030" stroke-opacity="0.6" stroke-width="1.1" fill="none"/><path d="M0.5 2.5V1.2Q0.5 0.5 1.2 0.5H4.8L5.8 1.8H13.2V11.5H0.5Z" fill="url(#fg)" stroke="#8c7830" stroke-width="0.9"/><path d="M1.2 2.6H12.6" stroke="#fff8c8" stroke-width="0.8"/><ellipse cx="7.5" cy="7.5" rx="5.5" ry="3" fill="#7aa0d8" stroke="#3a5aa8" stroke-width="0.8"/></svg><div class="t" style="left:83px;top:529.84px;font-size:12px;line-height:12px;color:#000;font-weight:400;transform:scaleX(0.928);transform-origin:0 0">Surface Release Types</div><div class="r" style="left:52px;top:555px;width:11px;height:1px;background:repeating-linear-gradient(90deg,#7a7a7a 0 1px,transparent 1px 2px)"></div><svg style="left:64px;top:548px" width="15" height="13" viewBox="0 0 15 13"><defs><linearGradient id="fg" x1="0" y1="0" x2="1" y2="1"><stop offset="0" stop-color="#fff3a0"/><stop offset="0.55" stop-color="#f6de6a"/><stop offset="1" stop-color="#e0b820"/></linearGradient></defs><path d="M1.5 12.2H14.2V3" stroke="#303030" stroke-opacity="0.6" stroke-width="1.1" fill="none"/><path d="M0.5 2.5V1.2Q0.5 0.5 1.2 0.5H4.8L5.8 1.8H13.2V11.5H0.5Z" fill="url(#fg)" stroke="#8c7830" stroke-width="0.9"/><path d="M1.2 2.6H12.6" stroke="#fff8c8" stroke-width="0.8"/><ellipse cx="7.5" cy="7.5" rx="5.5" ry="3" fill="#7aa0d8" stroke="#3a5aa8" stroke-width="0.8"/></svg><div class="t" style="left:83px;top:547.84px;font-size:12px;line-height:12px;color:#000;font-weight:400;transform:scaleX(0.921);transform-origin:0 0">Surface Releases</div><div class="r" style="left:52px;top:573px;width:11px;height:1px;background:repeating-linear-gradient(90deg,#7a7a7a 0 1px,transparent 1px 2px)"></div><svg style="left:64px;top:566px" width="15" height="13" viewBox="0 0 15 13"><defs><linearGradient id="fg" x1="0" y1="0" x2="1" y2="1"><stop offset="0" stop-color="#fff3a0"/><stop offset="0.55" stop-color="#f6de6a"/><stop offset="1" stop-color="#e0b820"/></linearGradient></defs><path d="M1.5 12.2H14.2V3" stroke="#303030" stroke-opacity="0.6" stroke-width="1.1" fill="none"/><path d="M0.5 2.5V1.2Q0.5 0.5 1.2 0.5H4.8L5.8 1.8H13.2V11.5H0.5Z" fill="url(#fg)" stroke="#8c7830" stroke-width="0.9"/><path d="M1.2 2.6H12.6" stroke="#fff8c8" stroke-width="0.8"/></svg><div class="t" style="left:83px;top:565.84px;font-size:12px;line-height:12px;color:#000;font-weight:400;transform:scaleX(0.980);transform-origin:0 0">Connection of Two Members</div><div class="r" style="left:52px;top:591px;width:11px;height:1px;background:repeating-linear-gradient(90deg,#7a7a7a 0 1px,transparent 1px 2px)"></div><svg style="left:64px;top:584px" width="15" height="13" viewBox="0 0 15 13"><defs><linearGradient id="fg" x1="0" y1="0" x2="1" y2="1"><stop offset="0" stop-color="#fff3a0"/><stop offset="0.55" stop-color="#f6de6a"/><stop offset="1" stop-color="#e0b820"/></linearGradient></defs><path d="M1.5 12.2H14.2V3" stroke="#303030" stroke-opacity="0.6" stroke-width="1.1" fill="none"/><path d="M0.5 2.5V1.2Q0.5 0.5 1.2 0.5H4.8L5.8 1.8H13.2V11.5H0.5Z" fill="url(#fg)" stroke="#8c7830" stroke-width="0.9"/><path d="M1.2 2.6H12.6" stroke="#fff8c8" stroke-width="0.8"/></svg><div class="t" style="left:83px;top:583.84px;font-size:12px;line-height:12px;color:#000;font-weight:400;transform:scaleX(0.985);transform-origin:0 0">Joints</div><div class="r" style="left:52px;top:609px;width:11px;height:1px;background:repeating-linear-gradient(90deg,#7a7a7a 0 1px,transparent 1px 2px)"></div><svg style="left:64px;top:602px" width="15" height="13" viewBox="0 0 15 13"><defs><linearGradient id="fg" x1="0" y1="0" x2="1" y2="1"><stop offset="0" stop-color="#fff3a0"/><stop offset="0.55" stop-color="#f6de6a"/><stop offset="1" stop-color="#e0b820"/></linearGradient></defs><path d="M1.5 12.2H14.2V3" stroke="#303030" stroke-opacity="0.6" stroke-width="1.1" fill="none"/><path d="M0.5 2.5V1.2Q0.5 0.5 1.2 0.5H4.8L5.8 1.8H13.2V11.5H0.5Z" fill="url(#fg)" stroke="#8c7830" stroke-width="0.9"/><path d="M1.2 2.6H12.6" stroke="#fff8c8" stroke-width="0.8"/><path d="M3 3L12 12M12 3L3 12" stroke="#d02020" stroke-width="1.6"/></svg><div class="t" style="left:83px;top:601.84px;font-size:12px;line-height:12px;color:#000;font-weight:400;transform:scaleX(1.005);transform-origin:0 0">Nodal Constraints</div><div class="r" style="left:33px;top:627px;width:11px;height:1px;background:repeating-linear-gradient(90deg,#7a7a7a 0 1px,transparent 1px 2px)"></div><div class="r" style="left:28px;top:623px;width:9px;height:9px;border:1px solid #8c8c8c;border-radius:2px;background:linear-gradient(#fff,#e4e4e4)"></div><div class="r" style="left:30px;top:627px;width:5px;height:1px;background:#2a4aa0"></div><svg style="left:43px;top:621px" width="17" height="13" viewBox="0 0 17 13"><path d="M1.5 12.5V1.5Q1.5 0.8 2.2 0.8H5.5L7 2.3H12.5Q13.3 2.3 13.3 3V5" fill="#d8b838" stroke="#8a7020" stroke-width="0.8"/><path d="M1.5 12.5L4 5H15.8L13.5 12.5Z" fill="#f4dc60" stroke="#8a7020" stroke-width="0.8"/><path d="M2.5 12.8H14" stroke="#404040" stroke-opacity="0.5"/></svg><div class="t" style="left:64px;top:619.84px;font-size:12px;line-height:12px;color:#000;font-weight:400;transform:scaleX(0.980);transform-origin:0 0">Load Cases and Combinations</div><div class="r" style="left:52px;top:645px;width:11px;height:1px;background:repeating-linear-gradient(90deg,#7a7a7a 0 1px,transparent 1px 2px)"></div><div class="r" style="left:47px;top:641px;width:9px;height:9px;border:1px solid #8c8c8c;border-radius:2px;background:linear-gradient(#fff,#e4e4e4)"></div><div class="r" style="left:49px;top:645px;width:5px;height:1px;background:#2a4aa0"></div><div class="r" style="left:51px;top:643px;width:1px;height:5px;background:#2a4aa0"></div><svg style="left:62px;top:637px" width="17" height="15"><path d="M1 13.5H15" stroke="#333" stroke-width="1.2"/><path d="M10 2V10" stroke="#2a5ad0" stroke-width="1.5"/><path d="M7.5 8L10 12L12.5 8Z" fill="#2a5ad0"/></svg><div class="t" style="left:83px;top:637.84px;font-size:12px;line-height:12px;color:#000;font-weight:400;transform:scaleX(0.935);transform-origin:0 0">Load Cases</div><div class="r" style="left:52px;top:663px;width:11px;height:1px;background:repeating-linear-gradient(90deg,#7a7a7a 0 1px,transparent 1px 2px)"></div><div class="r" style="left:47px;top:659px;width:9px;height:9px;border:1px solid #8c8c8c;border-radius:2px;background:linear-gradient(#fff,#e4e4e4)"></div><div class="r" style="left:49px;top:663px;width:5px;height:1px;background:#2a4aa0"></div><div class="r" style="left:51px;top:661px;width:1px;height:5px;background:#2a4aa0"></div><svg style="left:61px;top:653px" width="18" height="19"><rect x="0.5" y="2.5" width="5" height="3" fill="#fff" stroke="#606060" stroke-width="0.9"/><rect x="0.5" y="14.5" width="5" height="3" fill="#fff" stroke="#606060" stroke-width="0.9"/><path d="M6 4Q10 4 11 7M6 16Q10 16 11 12" stroke="#505050" stroke-width="0.9" fill="none"/><path d="M9.5 6L11.5 7.5L11.5 5Z M9.5 13L11.5 11.5L11.5 14Z" fill="#404040"/><circle cx="13.5" cy="9" r="2.6" fill="#3a7ae0"/></svg><div class="t" style="left:83px;top:655.84px;font-size:12px;line-height:12px;color:#000;font-weight:400;transform:scaleX(1.039);transform-origin:0 0">Actions</div><div class="r" style="left:52px;top:681px;width:11px;height:1px;background:repeating-linear-gradient(90deg,#7a7a7a 0 1px,transparent 1px 2px)"></div><div class="r" style="left:47px;top:677px;width:9px;height:9px;border:1px solid #8c8c8c;border-radius:2px;background:linear-gradient(#fff,#e4e4e4)"></div><div class="r" style="left:49px;top:681px;width:5px;height:1px;background:#2a4aa0"></div><div class="r" style="left:51px;top:679px;width:1px;height:5px;background:#2a4aa0"></div><svg style="left:61px;top:671px" width="18" height="19"><rect x="0.5" y="2.5" width="5" height="3" fill="#fff" stroke="#606060" stroke-width="0.9"/><rect x="0.5" y="14.5" width="5" height="3" fill="#fff" stroke="#606060" stroke-width="0.9"/><path d="M6 4Q10 4 11 7M6 16Q10 16 11 12" stroke="#505050" stroke-width="0.9" fill="none"/><path d="M9.5 6L11.5 7.5L11.5 5Z M9.5 13L11.5 11.5L11.5 14Z" fill="#404040"/><path d="M10.5 7.5h6M10.5 10.5h6" stroke="#3a7ae0" stroke-width="1.8"/></svg><div class="t" style="left:83px;top:673.84px;font-size:12px;line-height:12px;color:#000;font-weight:400;transform:scaleX(0.980);transform-origin:0 0">Combination Expressions</div><div class="r" style="left:52px;top:699px;width:11px;height:1px;background:repeating-linear-gradient(90deg,#7a7a7a 0 1px,transparent 1px 2px)"></div><div class="r" style="left:47px;top:695px;width:9px;height:9px;border:1px solid #8c8c8c;border-radius:2px;background:linear-gradient(#fff,#e4e4e4)"></div><div class="r" style="left:49px;top:699px;width:5px;height:1px;background:#2a4aa0"></div><div class="r" style="left:51px;top:697px;width:1px;height:5px;background:#2a4aa0"></div><svg style="left:61px;top:689px" width="18" height="19"><rect x="0.5" y="2.5" width="5" height="3" fill="#fff" stroke="#606060" stroke-width="0.9"/><rect x="0.5" y="14.5" width="5" height="3" fill="#fff" stroke="#606060" stroke-width="0.9"/><path d="M6 4Q10 4 11 7M6 16Q10 16 11 12" stroke="#505050" stroke-width="0.9" fill="none"/><path d="M9.5 6L11.5 7.5L11.5 5Z M9.5 13L11.5 11.5L11.5 14Z" fill="#404040"/><path d="M13.5 5.5L16.5 9L13.5 12.5L10.5 9Z" fill="#3a7ae0"/></svg><div class="t" style="left:83px;top:691.84px;font-size:12px;line-height:12px;color:#000;font-weight:400;transform:scaleX(1.035);transform-origin:0 0">Action Combinations</div><div class="r" style="left:52px;top:717px;width:11px;height:1px;background:repeating-linear-gradient(90deg,#7a7a7a 0 1px,transparent 1px 2px)"></div><svg style="left:61px;top:707px" width="18" height="19"><rect x="0.5" y="2.5" width="5" height="3" fill="#fff" stroke="#606060" stroke-width="0.9"/><rect x="0.5" y="14.5" width="5" height="3" fill="#fff" stroke="#606060" stroke-width="0.9"/><path d="M6 4Q10 4 11 7M6 16Q10 16 11 12" stroke="#505050" stroke-width="0.9" fill="none"/><path d="M9.5 6L11.5 7.5L11.5 5Z M9.5 13L11.5 11.5L11.5 14Z" fill="#404040"/><rect x="11" y="7" width="5" height="4" fill="#20b020" stroke="#106010" stroke-width="0.6"/></svg><div class="t" style="left:83px;top:709.84px;font-size:12px;line-height:12px;color:#000;font-weight:400;transform:scaleX(1.014);transform-origin:0 0">Load Combinations</div><div class="r" style="left:52px;top:735px;width:11px;height:1px;background:repeating-linear-gradient(90deg,#7a7a7a 0 1px,transparent 1px 2px)"></div><div class="r" style="left:47px;top:731px;width:9px;height:9px;border:1px solid #8c8c8c;border-radius:2px;background:linear-gradient(#fff,#e4e4e4)"></div><div class="r" style="left:49px;top:735px;width:5px;height:1px;background:#2a4aa0"></div><div class="r" style="left:51px;top:733px;width:1px;height:5px;background:#2a4aa0"></div><svg style="left:61px;top:725px" width="18" height="19"><rect x="0.5" y="2.5" width="5" height="3" fill="#fff" stroke="#606060" stroke-width="0.9"/><rect x="0.5" y="14.5" width="5" height="3" fill="#fff" stroke="#606060" stroke-width="0.9"/><path d="M6 4Q10 4 11 7M6 16Q10 16 11 12" stroke="#505050" stroke-width="0.9" fill="none"/><path d="M9.5 6L11.5 7.5L11.5 5Z M9.5 13L11.5 11.5L11.5 14Z" fill="#404040"/><rect x="11" y="7" width="5" height="4" fill="#3a7ae0" stroke="#204a90" stroke-width="0.6"/></svg><div class="t" style="left:83px;top:727.84px;font-size:12px;line-height:12px;color:#000;font-weight:400;transform:scaleX(1.002);transform-origin:0 0">Result Combinations</div><div class="r" style="left:33px;top:753px;width:11px;height:1px;background:repeating-linear-gradient(90deg,#7a7a7a 0 1px,transparent 1px 2px)"></div><div class="r" style="left:28px;top:749px;width:9px;height:9px;border:1px solid #8c8c8c;border-radius:2px;background:linear-gradient(#fff,#e4e4e4)"></div><div class="r" style="left:30px;top:753px;width:5px;height:1px;background:#2a4aa0"></div><div class="r" style="left:32px;top:751px;width:1px;height:5px;background:#2a4aa0"></div><svg style="left:45px;top:746px" width="15" height="13" viewBox="0 0 15 13"><defs><linearGradient id="fg" x1="0" y1="0" x2="1" y2="1"><stop offset="0" stop-color="#fff3a0"/><stop offset="0.55" stop-color="#f6de6a"/><stop offset="1" stop-color="#e0b820"/></linearGradient></defs><path d="M1.5 12.2H14.2V3" stroke="#303030" stroke-opacity="0.6" stroke-width="1.1" fill="none"/><path d="M0.5 2.5V1.2Q0.5 0.5 1.2 0.5H4.8L5.8 1.8H13.2V11.5H0.5Z" fill="url(#fg)" stroke="#8c7830" stroke-width="0.9"/><path d="M1.2 2.6H12.6" stroke="#fff8c8" stroke-width="0.8"/></svg><div class="t" style="left:64px;top:745.84px;font-size:12px;line-height:12px;color:#000;font-weight:400;transform:scaleX(0.985);transform-origin:0 0">Loads</div><div class="r" style="left:33px;top:771px;width:11px;height:1px;background:repeating-linear-gradient(90deg,#7a7a7a 0 1px,transparent 1px 2px)"></div><svg style="left:45px;top:764px" width="15" height="13" viewBox="0 0 15 13"><defs><linearGradient id="fg" x1="0" y1="0" x2="1" y2="1"><stop offset="0" stop-color="#fff3a0"/><stop offset="0.55" stop-color="#f6de6a"/><stop offset="1" stop-color="#e0b820"/></linearGradient></defs><path d="M1.5 12.2H14.2V3" stroke="#303030" stroke-opacity="0.6" stroke-width="1.1" fill="none"/><path d="M0.5 2.5V1.2Q0.5 0.5 1.2 0.5H4.8L5.8 1.8H13.2V11.5H0.5Z" fill="url(#fg)" stroke="#8c7830" stroke-width="0.9"/><path d="M1.2 2.6H12.6" stroke="#fff8c8" stroke-width="0.8"/></svg><div class="t" style="left:64px;top:763.84px;font-size:12px;line-height:12px;color:#000;font-weight:400;transform:scaleX(0.947);transform-origin:0 0">Results</div><div class="r" style="left:33px;top:789px;width:11px;height:1px;background:repeating-linear-gradient(90deg,#7a7a7a 0 1px,transparent 1px 2px)"></div><svg style="left:45px;top:782px" width="15" height="13" viewBox="0 0 15 13"><defs><linearGradient id="fg" x1="0" y1="0" x2="1" y2="1"><stop offset="0" stop-color="#fff3a0"/><stop offset="0.55" stop-color="#f6de6a"/><stop offset="1" stop-color="#e0b820"/></linearGradient></defs><path d="M1.5 12.2H14.2V3" stroke="#303030" stroke-opacity="0.6" stroke-width="1.1" fill="none"/><path d="M0.5 2.5V1.2Q0.5 0.5 1.2 0.5H4.8L5.8 1.8H13.2V11.5H0.5Z" fill="url(#fg)" stroke="#8c7830" stroke-width="0.9"/><path d="M1.2 2.6H12.6" stroke="#fff8c8" stroke-width="0.8"/></svg><div class="t" style="left:64px;top:781.84px;font-size:12px;line-height:12px;color:#000;font-weight:400;transform:scaleX(0.975);transform-origin:0 0">Sections</div><div class="r" style="left:33px;top:807px;width:11px;height:1px;background:repeating-linear-gradient(90deg,#7a7a7a 0 1px,transparent 1px 2px)"></div><svg style="left:45px;top:800px" width="15" height="13" viewBox="0 0 15 13"><defs><linearGradient id="fg" x1="0" y1="0" x2="1" y2="1"><stop offset="0" stop-color="#fff3a0"/><stop offset="0.55" stop-color="#f6de6a"/><stop offset="1" stop-color="#e0b820"/></linearGradient></defs><path d="M1.5 12.2H14.2V3" stroke="#303030" stroke-opacity="0.6" stroke-width="1.1" fill="none"/><path d="M0.5 2.5V1.2Q0.5 0.5 1.2 0.5H4.8L5.8 1.8H13.2V11.5H0.5Z" fill="url(#fg)" stroke="#8c7830" stroke-width="0.9"/><path d="M1.2 2.6H12.6" stroke="#fff8c8" stroke-width="0.8"/></svg><div class="t" style="left:64px;top:799.84px;font-size:12px;line-height:12px;color:#000;font-weight:400;transform:scaleX(0.968);transform-origin:0 0">Average Regions</div><div class="r" style="left:33px;top:825px;width:11px;height:1px;background:repeating-linear-gradient(90deg,#7a7a7a 0 1px,transparent 1px 2px)"></div><svg style="left:45px;top:818px" width="15" height="13" viewBox="0 0 15 13"><defs><linearGradient id="fg" x1="0" y1="0" x2="1" y2="1"><stop offset="0" stop-color="#fff3a0"/><stop offset="0.55" stop-color="#f6de6a"/><stop offset="1" stop-color="#e0b820"/></linearGradient></defs><path d="M1.5 12.2H14.2V3" stroke="#303030" stroke-opacity="0.6" stroke-width="1.1" fill="none"/><path d="M0.5 2.5V1.2Q0.5 0.5 1.2 0.5H4.8L5.8 1.8H13.2V11.5H0.5Z" fill="url(#fg)" stroke="#8c7830" stroke-width="0.9"/><path d="M1.2 2.6H12.6" stroke="#fff8c8" stroke-width="0.8"/></svg><div class="t" style="left:64px;top:817.84px;font-size:12px;line-height:12px;color:#000;font-weight:400;transform:scaleX(1.006);transform-origin:0 0">Printout Reports</div><div class="r" style="left:33px;top:843px;width:11px;height:1px;background:repeating-linear-gradient(90deg,#7a7a7a 0 1px,transparent 1px 2px)"></div><div class="r" style="left:28px;top:839px;width:9px;height:9px;border:1px solid #8c8c8c;border-radius:2px;background:linear-gradient(#fff,#e4e4e4)"></div><div class="r" style="left:30px;top:843px;width:5px;height:1px;background:#2a4aa0"></div><div class="r" style="left:32px;top:841px;width:1px;height:5px;background:#2a4aa0"></div><svg style="left:45px;top:836px" width="15" height="13" viewBox="0 0 15 13"><defs><linearGradient id="fg" x1="0" y1="0" x2="1" y2="1"><stop offset="0" stop-color="#fff3a0"/><stop offset="0.55" stop-color="#f6de6a"/><stop offset="1" stop-color="#e0b820"/></linearGradient></defs><path d="M1.5 12.2H14.2V3" stroke="#303030" stroke-opacity="0.6" stroke-width="1.1" fill="none"/><path d="M0.5 2.5V1.2Q0.5 0.5 1.2 0.5H4.8L5.8 1.8H13.2V11.5H0.5Z" fill="url(#fg)" stroke="#8c7830" stroke-width="0.9"/><path d="M1.2 2.6H12.6" stroke="#fff8c8" stroke-width="0.8"/></svg><div class="t" style="left:64px;top:835.84px;font-size:12px;line-height:12px;color:#000;font-weight:400;transform:scaleX(0.985);transform-origin:0 0">Guide Objects</div><div class="r" style="left:33px;top:861px;width:11px;height:1px;background:repeating-linear-gradient(90deg,#7a7a7a 0 1px,transparent 1px 2px)"></div><div class="r" style="left:28px;top:857px;width:9px;height:9px;border:1px solid #8c8c8c;border-radius:2px;background:linear-gradient(#fff,#e4e4e4)"></div><div class="r" style="left:30px;top:861px;width:5px;height:1px;background:#2a4aa0"></div><div class="r" style="left:32px;top:859px;width:1px;height:5px;background:#2a4aa0"></div><svg style="left:43px;top:855px" width="17" height="13" viewBox="0 0 17 13"><path d="M1.5 12.5V1.5Q1.5 0.8 2.2 0.8H5.5L7 2.3H12.5Q13.3 2.3 13.3 3V5" fill="#d8b838" stroke="#8a7020" stroke-width="0.8"/><path d="M1.5 12.5L4 5H15.8L13.5 12.5Z" fill="#f4dc60" stroke="#8a7020" stroke-width="0.8"/><path d="M2.5 12.8H14" stroke="#404040" stroke-opacity="0.5"/></svg><div class="t" style="left:64px;top:853.84px;font-size:12px;line-height:12px;color:#000;font-weight:400;transform:scaleX(0.980);transform-origin:0 0">Add-on Modules</div></div></div><div class="r" style="left:406px;top:0px;width:794px;height:316px;background:#fff;border-left:1px solid #6a6a6a;border-top:1px solid #6a6a6a"></div><div class="t" style="left:412px;top:7.82px;font-size:10.85px;line-height:10.85px;color:#000;font-weight:400;">LC50 : Step 1/3 Movement Sets 1 from RF-MOVE-Surfaces</div><div class="t" style="left:412px;top:21.82px;font-size:10.85px;line-height:10.85px;color:#000;font-weight:400;">Loads [kN/m^2]</div><div class="clip" style="left:407px;top:1px;width:793px;height:315px"><div style="position:absolute;left:-407px;top:-1px;width:1200px;height:316px"><svg style="left:0;top:0" width="1200" height="316"><defs><pattern id="dots" width="4" height="4" patternUnits="userSpaceOnUse"><rect width="4" height="4" fill="#a8a8a8"/><rect x="1" y="1" width="1" height="1" fill="#a0a0a0"/></pattern></defs><polygon points="447,192 1032,104 1125,193 540,281" fill="url(#dots)"/><g opacity="0.5"><polygon points="1028,119 1044,117 1052,126 1034,127" fill="#50b050"/><rect x="1035" y="111" width="9" height="8" fill="#50b050"/><rect x="1038" y="127" width="5" height="5" fill="#50b050"/></g><g opacity="0.5"><polygon points="1042,133 1058,131 1066,140 1048,141" fill="#50b050"/><rect x="1049" y="125" width="9" height="8" fill="#50b050"/><rect x="1052" y="141" width="5" height="5" fill="#50b050"/></g><g opacity="0.5"><polygon points="1062,154 1078,152 1086,161 1068,162" fill="#50b050"/><rect x="1069" y="146" width="9" height="8" fill="#50b050"/><rect x="1072" y="162" width="5" height="5" fill="#50b050"/></g><g opacity="0.5"><polygon points="1078,169 1094,167 1102,176 1084,177" fill="#50b050"/><rect x="1085" y="161" width="9" height="8" fill="#50b050"/><rect x="1088" y="177" width="5" height="5" fill="#50b050"/></g><g opacity="0.5"><polygon points="1094,186 1110,184 1118,193 1100,194" fill="#50b050"/><rect x="1101" y="178" width="9" height="8" fill="#50b050"/><rect x="1104" y="194" width="5" height="5" fill="#50b050"/></g><g opacity="0.5"><polygon points="733,161 749,159 757,168 739,169" fill="#50b050"/><rect x="740" y="153" width="9" height="8" fill="#50b050"/><rect x="743" y="169" width="5" height="5" fill="#50b050"/></g><g opacity="0.5"><polygon points="748,176 764,174 772,183 754,184" fill="#50b050"/><rect x="755" y="168" width="9" height="8" fill="#50b050"/><rect x="758" y="184" width="5" height="5" fill="#50b050"/></g><g opacity="0.5"><polygon points="767,196 783,194 791,203 773,204" fill="#50b050"/><rect x="774" y="188" width="9" height="8" fill="#50b050"/><rect x="777" y="204" width="5" height="5" fill="#50b050"/></g><g opacity="0.5"><polygon points="783,211 799,209 807,218 789,219" fill="#50b050"/><rect x="790" y="203" width="9" height="8" fill="#50b050"/><rect x="793" y="219" width="5" height="5" fill="#50b050"/></g><g opacity="0.5"><polygon points="800,228 816,226 824,235 806,236" fill="#50b050"/><rect x="807" y="220" width="9" height="8" fill="#50b050"/><rect x="810" y="236" width="5" height="5" fill="#50b050"/></g><g stroke="#1e1e1e" stroke-width="1.1" fill="none"><path d="M447 192L1032 104M462 202L1044 116M493 237L1079 149M528 270L1113 182M540 281L1125 193"/></g><g stroke="#30e030" stroke-width="1.3"><path d="M447 192L540 281M1032 104L1125 193M740 148L832 237"/></g><polygon points="449,193 457,198 456,204 449,204" fill="#30e030" fill-opacity="0.75"/><polygon points="441,206 450,202 463,211 452,214" fill="#3ee83e"/><rect x="450" y="213" width="5" height="5" fill="#86f086"/><polygon points="464,208 472,213 471,219 464,219" fill="#30e030" fill-opacity="0.75"/><polygon points="456,221 465,217 478,226 467,229" fill="#3ee83e"/><rect x="465" y="228" width="5" height="5" fill="#86f086"/><polygon points="482,224 490,229 489,235 482,235" fill="#30e030" fill-opacity="0.75"/><polygon points="474,237 483,233 496,242 485,245" fill="#3ee83e"/><rect x="483" y="244" width="5" height="5" fill="#86f086"/><polygon points="499,241 507,246 506,252 499,252" fill="#30e030" fill-opacity="0.75"/><polygon points="491,254 500,250 513,259 502,262" fill="#3ee83e"/><rect x="500" y="261" width="5" height="5" fill="#86f086"/><polygon points="516,258 524,263 523,269 516,269" fill="#30e030" fill-opacity="0.75"/><polygon points="508,271 517,267 530,276 519,279" fill="#3ee83e"/><rect x="517" y="278" width="5" height="5" fill="#86f086"/><polygon points="532,273 540,278 539,284 532,284" fill="#30e030" fill-opacity="0.75"/><polygon points="524,286 533,282 546,291 535,294" fill="#3ee83e"/><rect x="533" y="293" width="5" height="5" fill="#86f086"/><polygon points="1108,196 1124,194 1132,203 1114,204" fill="#22e622"/><rect x="1119" y="204" width="5" height="5" fill="#86f086"/><polygon points="815,240 831,238 839,247 821,248" fill="#22e622"/><rect x="826" y="248" width="5" height="5" fill="#86f086"/><circle cx="447" cy="192" r="2" fill="#8a0a14"/><circle cx="462" cy="202" r="2" fill="#8a0a14"/><circle cx="493" cy="237" r="2" fill="#8a0a14"/><circle cx="528" cy="270" r="2" fill="#8a0a14"/><circle cx="540" cy="281" r="2" fill="#8a0a14"/><circle cx="1032" cy="104" r="2" fill="#8a0a14"/><circle cx="1044" cy="116" r="2" fill="#8a0a14"/><circle cx="1079" cy="149" r="2" fill="#8a0a14"/><circle cx="1113" cy="182" r="2" fill="#8a0a14"/><circle cx="1125" cy="193" r="2" fill="#8a0a14"/><circle cx="740" cy="148" r="2" fill="#8a0a14"/><circle cx="752" cy="159" r="2" fill="#8a0a14"/><circle cx="786" cy="192" r="2" fill="#8a0a14"/><circle cx="820" cy="226" r="2" fill="#8a0a14"/><circle cx="832" cy="237" r="2" fill="#8a0a14"/><path d="M482 205L491 202M485 209L494 206" stroke="#e020e0" stroke-width="1" stroke-dasharray="2 1.5"/><circle cx="481" cy="204" r="1.8" fill="#9a0a20"/><circle cx="491" cy="201" r="1.8" fill="#9a0a20"/><circle cx="484" cy="209" r="1.8" fill="#9a0a20"/><circle cx="494" cy="206" r="1.8" fill="#9a0a20"/><path d="M518 200L527 197M521 204L530 201" stroke="#e020e0" stroke-width="1" stroke-dasharray="2 1.5"/><circle cx="517" cy="199" r="1.8" fill="#9a0a20"/><circle cx="527" cy="196" r="1.8" fill="#9a0a20"/><circle cx="520" cy="204" r="1.8" fill="#9a0a20"/><circle cx="530" cy="201" r="1.8" fill="#9a0a20"/><path d="M506 229L515 226M509 233L518 230" stroke="#e020e0" stroke-width="1" stroke-dasharray="2 1.5"/><circle cx="505" cy="228" r="1.8" fill="#9a0a20"/><circle cx="515" cy="225" r="1.8" fill="#9a0a20"/><circle cx="508" cy="233" r="1.8" fill="#9a0a20"/><circle cx="518" cy="230" r="1.8" fill="#9a0a20"/><path d="M518 240L527 237M521 244L530 241" stroke="#e020e0" stroke-width="1" stroke-dasharray="2 1.5"/><circle cx="517" cy="239" r="1.8" fill="#9a0a20"/><circle cx="527" cy="236" r="1.8" fill="#9a0a20"/><circle cx="520" cy="244" r="1.8" fill="#9a0a20"/><circle cx="530" cy="241" r="1.8" fill="#9a0a20"/><path d="M542 219L551 216M545 223L554 220" stroke="#e020e0" stroke-width="1" stroke-dasharray="2 1.5"/><circle cx="541" cy="218" r="1.8" fill="#9a0a20"/><circle cx="551" cy="215" r="1.8" fill="#9a0a20"/><circle cx="544" cy="223" r="1.8" fill="#9a0a20"/><circle cx="554" cy="220" r="1.8" fill="#9a0a20"/><path d="M554 233L563 230M557 237L566 234" stroke="#e020e0" stroke-width="1" stroke-dasharray="2 1.5"/><circle cx="553" cy="232" r="1.8" fill="#9a0a20"/><circle cx="563" cy="229" r="1.8" fill="#9a0a20"/><circle cx="556" cy="237" r="1.8" fill="#9a0a20"/><circle cx="566" cy="234" r="1.8" fill="#9a0a20"/><path d="M541 260L550 257M544 264L553 261" stroke="#e020e0" stroke-width="1" stroke-dasharray="2 1.5"/><circle cx="540" cy="259" r="1.8" fill="#9a0a20"/><circle cx="550" cy="256" r="1.8" fill="#9a0a20"/><circle cx="543" cy="264" r="1.8" fill="#9a0a20"/><circle cx="553" cy="261" r="1.8" fill="#9a0a20"/><path d="M576 257L585 254M579 261L588 258" stroke="#e020e0" stroke-width="1" stroke-dasharray="2 1.5"/><circle cx="575" cy="256" r="1.8" fill="#9a0a20"/><circle cx="585" cy="253" r="1.8" fill="#9a0a20"/><circle cx="578" cy="261" r="1.8" fill="#9a0a20"/><circle cx="588" cy="258" r="1.8" fill="#9a0a20"/><g stroke="#1c1c8c" stroke-width="1" fill="#8080d0" fill-opacity="0.45"><polygon points="482,98 494,98 499,93 487,92" fill="#c8c8f0" fill-opacity="0.8"/><rect x="482" y="98" width="12" height="94"/><polygon points="494,98 499,93 499,186 494,192"/><polygon points="482,192 494,192 499,186 487,186" fill="none"/></g><g stroke="#1c1c8c" stroke-width="1"><path d="M485 99V190M492 96V185"/></g><circle cx="486" cy="97" r="1.5" fill="#1c1c8c"/><polygon points="479,182 485,182 482,189" fill="#1c1c8c"/><polygon points="491,182 497,182 494,189" fill="#1c1c8c"/><polygon points="496,182 502,182 499,189" fill="#1c1c8c"/><g stroke="#1c1c8c" stroke-width="1" fill="#8080d0" fill-opacity="0.45"><polygon points="517,92 529,92 534,87 522,86" fill="#c8c8f0" fill-opacity="0.8"/><rect x="517" y="92" width="12" height="115"/><polygon points="529,92 534,87 534,201 529,207"/><polygon points="517,207 529,207 534,201 522,201" fill="none"/></g><g stroke="#1c1c8c" stroke-width="1"><path d="M520 93V205M527 90V200"/></g><circle cx="521" cy="91" r="1.5" fill="#1c1c8c"/><polygon points="514,197 520,197 517,204" fill="#1c1c8c"/><polygon points="526,197 532,197 529,204" fill="#1c1c8c"/><polygon points="531,197 537,197 534,204" fill="#1c1c8c"/><g stroke="#1c1c8c" stroke-width="1" fill="#8080d0" fill-opacity="0.45"><polygon points="505,120 517,120 522,115 510,114" fill="#c8c8f0" fill-opacity="0.8"/><rect x="505" y="120" width="12" height="94"/><polygon points="517,120 522,115 522,208 517,214"/><polygon points="505,214 517,214 522,208 510,208" fill="none"/></g><g stroke="#1c1c8c" stroke-width="1"><path d="M508 121V212M515 118V207"/></g><circle cx="509" cy="119" r="1.5" fill="#1c1c8c"/><polygon points="502,204 508,204 505,211" fill="#1c1c8c"/><polygon points="514,204 520,204 517,211" fill="#1c1c8c"/><polygon points="519,204 525,204 522,211" fill="#1c1c8c"/><g stroke="#1c1c8c" stroke-width="1" fill="#8080d0" fill-opacity="0.45"><polygon points="540,115 552,115 557,110 545,109" fill="#c8c8f0" fill-opacity="0.8"/><rect x="540" y="115" width="12" height="104"/><polygon points="552,115 557,110 557,213 552,219"/><polygon points="540,219 552,219 557,213 545,213" fill="none"/></g><g stroke="#1c1c8c" stroke-width="1"><path d="M543 116V217M550 113V212"/></g><circle cx="544" cy="114" r="1.5" fill="#1c1c8c"/><polygon points="537,209 543,209 540,216" fill="#1c1c8c"/><polygon points="549,209 555,209 552,216" fill="#1c1c8c"/><polygon points="554,209 560,209 557,216" fill="#1c1c8c"/><g stroke="#1c1c8c" stroke-width="1" fill="#8080d0" fill-opacity="0.45"><polygon points="518,162 530,162 535,157 523,156" fill="#c8c8f0" fill-opacity="0.8"/><rect x="518" y="162" width="12" height="63"/><polygon points="530,162 535,157 535,219 530,225"/><polygon points="518,225 530,225 535,219 523,219" fill="none"/></g><g stroke="#1c1c8c" stroke-width="1"><path d="M521 163V223M528 160V218"/></g><circle cx="522" cy="161" r="1.5" fill="#1c1c8c"/><polygon points="515,215 521,215 518,222" fill="#1c1c8c"/><polygon points="527,215 533,215 530,222" fill="#1c1c8c"/><polygon points="532,215 538,215 535,222" fill="#1c1c8c"/><g stroke="#1c1c8c" stroke-width="1" fill="#8080d0" fill-opacity="0.45"><polygon points="553,158 565,158 570,153 558,152" fill="#c8c8f0" fill-opacity="0.8"/><rect x="553" y="158" width="12" height="60"/><polygon points="565,158 570,153 570,212 565,218"/><polygon points="553,218 565,218 570,212 558,212" fill="none"/></g><g stroke="#1c1c8c" stroke-width="1"><path d="M556 159V216M563 156V211"/></g><circle cx="557" cy="157" r="1.5" fill="#1c1c8c"/><polygon points="550,208 556,208 553,215" fill="#1c1c8c"/><polygon points="562,208 568,208 565,215" fill="#1c1c8c"/><polygon points="567,208 573,208 570,215" fill="#1c1c8c"/><g stroke="#1c1c8c" stroke-width="1" fill="#8080d0" fill-opacity="0.45"><polygon points="540,183 552,183 557,178 545,177" fill="#c8c8f0" fill-opacity="0.8"/><rect x="540" y="183" width="12" height="63"/><polygon points="552,183 557,178 557,240 552,246"/><polygon points="540,246 552,246 557,240 545,240" fill="none"/></g><g stroke="#1c1c8c" stroke-width="1"><path d="M543 184V244M550 181V239"/></g><circle cx="544" cy="182" r="1.5" fill="#1c1c8c"/><polygon points="537,236 543,236 540,243" fill="#1c1c8c"/><polygon points="549,236 555,236 552,243" fill="#1c1c8c"/><polygon points="554,236 560,236 557,243" fill="#1c1c8c"/><g stroke="#1c1c8c" stroke-width="1" fill="#8080d0" fill-opacity="0.45"><polygon points="575,180 587,180 592,175 580,174" fill="#c8c8f0" fill-opacity="0.8"/><rect x="575" y="180" width="12" height="62"/><polygon points="587,180 592,175 592,236 587,242"/><polygon points="575,242 587,242 592,236 580,236" fill="none"/></g><g stroke="#1c1c8c" stroke-width="1"><path d="M578 181V240M585 178V235"/></g><circle cx="579" cy="179" r="1.5" fill="#1c1c8c"/><polygon points="572,232 578,232 575,239" fill="#1c1c8c"/><polygon points="584,232 590,232 587,239" fill="#1c1c8c"/><polygon points="589,232 595,232 592,239" fill="#1c1c8c"/><path d="M447 192L476 188" stroke="#f01010" stroke-width="2"/><polygon points="473,184.5 485,186.5 474,191" fill="#f01010"/><path d="M447 192V222" stroke="#1010e0" stroke-width="2"/><polygon points="443,219 451,219 447,230" fill="#1010e0"/><path d="M490 184L496 190M496 184L490 190" stroke="#ff3030" stroke-width="1"/></svg><div class="t" style="left:444px;top:234.53px;font-size:10px;line-height:10px;color:#1010e0;font-weight:400;">Z</div><div class="t" style="left:463px;top:83.38px;font-size:9px;line-height:9px;color:#000068;font-weight:400;-webkit-text-stroke:0.25px #000068">p-ZL 937.50</div><div class="t" style="left:500px;top:77.38px;font-size:9px;line-height:9px;color:#000068;font-weight:400;-webkit-text-stroke:0.25px #000068">p-ZL 937.50</div><div class="t" style="left:487px;top:106.38px;font-size:9px;line-height:9px;color:#000068;font-weight:400;-webkit-text-stroke:0.25px #000068">p-ZL 937.50</div><div class="t" style="left:522px;top:99.38px;font-size:9px;line-height:9px;color:#000068;font-weight:400;-webkit-text-stroke:0.25px #000068">p-ZL 937.50</div><div class="t" style="left:499px;top:148.38px;font-size:9px;line-height:9px;color:#000068;font-weight:400;-webkit-text-stroke:0.25px #000068">p-ZL 625.00</div><div class="t" style="left:534px;top:143.38px;font-size:9px;line-height:9px;color:#000068;font-weight:400;-webkit-text-stroke:0.25px #000068">p-ZL 625.00</div><div class="t" style="left:522px;top:169.38px;font-size:9px;line-height:9px;color:#000068;font-weight:400;-webkit-text-stroke:0.25px #000068">p-ZL 625.00</div><div class="t" style="left:557px;top:165.38px;font-size:9px;line-height:9px;color:#000068;font-weight:400;-webkit-text-stroke:0.25px #000068">p-ZL 625.00</div></div></div><div class="r" style="left:202px;top:315px;width:973px;height:600px;background:#f0f0f0;border:1px solid #939393;box-shadow:1px 3px 14px 3px rgba(0,0,0,0.2)"></div><div class="r" style="left:203px;top:316px;width:971px;height:30px;background:#fff"></div><div class="t" style="left:211px;top:325.18px;font-size:11.6px;line-height:11.6px;color:#9a9a9a;font-weight:400;">Edit Load Cases and Combinations</div><svg style="left:1153px;top:324px" width="12" height="12"><path d="M1 1L11 11M11 1L1 11" stroke="#707070" stroke-width="1.1"/></svg><div class="r" style="left:209px;top:373px;width:957px;height:540px;background:#fff;border:1px solid #d9d9d9"></div><div class="r" style="left:211px;top:355px;width:67px;height:19px;background:#f0f0f0;border:1px solid #d9d9d9"></div><div class="t" style="left:211px;width:67px;text-align:center;top:360.11px;font-size:10.5px;line-height:10.5px;color:#000;font-weight:400;">Load Cases</div><div class="r" style="left:277px;top:353px;width:50px;height:21px;background:#fff;border:1px solid #d9d9d9;border-bottom:none"></div><div class="t" style="left:277px;width:50px;text-align:center;top:358.11px;font-size:10.5px;line-height:10.5px;color:#000;font-weight:400;">Actions</div><div class="r" style="left:326px;top:355px;width:130px;height:19px;background:#f0f0f0;border:1px solid #d9d9d9"></div><div class="t" style="left:326px;width:130px;text-align:center;top:360.11px;font-size:10.5px;line-height:10.5px;color:#000;font-weight:400;">Combination Expressions</div><div class="r" style="left:455px;top:355px;width:110px;height:19px;background:#f0f0f0;border:1px solid #d9d9d9"></div><div class="t" style="left:455px;width:110px;text-align:center;top:360.11px;font-size:10.5px;line-height:10.5px;color:#000;font-weight:400;">Action Combinations</div><div class="r" style="left:564px;top:355px;width:103px;height:19px;background:#f0f0f0;border:1px solid #d9d9d9"></div><div class="t" style="left:564px;width:103px;text-align:center;top:360.11px;font-size:10.5px;line-height:10.5px;color:#000;font-weight:400;">Load Combinations</div><div class="r" style="left:666px;top:355px;width:108px;height:19px;background:#f0f0f0;border:1px solid #d9d9d9"></div><div class="t" style="left:666px;width:108px;text-align:center;top:360.11px;font-size:10.5px;line-height:10.5px;color:#000;font-weight:400;">Result Combinations</div><div class="r" style="left:278px;top:373px;width:48px;height:1px;background:#fff"></div><svg style="left:218px;top:383px" width="270" height="16"><polygon points="0,0 260,0 270,9 270,16 0,16" fill="#dce6f4"/><path d="M269.5 9V16" stroke="#b0b0f0"/></svg><div class="t" style="left:220px;top:385.69px;font-size:11px;line-height:11px;color:#22426e;font-weight:400;">Existing Actions</div><div class="r" style="left:487px;top:392px;width:1px;height:508px;background:#b4b4ee"></div><div class="r" style="left:218px;top:399px;width:269px;height:501px;background:#fff;border-left:1px solid #a0a0a0;border-top:1px solid #a0a0a0"></div><div class="r" style="left:295px;top:400px;width:1px;height:500px;background:#000"></div><div class="r" style="left:220px;top:404px;width:25px;height:11px;background:#000"></div><div class="t" style="left:220px;width:25px;text-align:center;top:404.96px;font-size:9.5px;line-height:9.5px;color:#fff;font-weight:700;">G</div><div class="t" style="left:249px;top:405.11px;font-size:10.5px;line-height:10.5px;color:#000;font-weight:400;">A1</div><div class="t" style="left:299px;top:405.11px;font-size:10.5px;line-height:10.5px;color:#000;font-weight:400;">Permanent</div><div class="r" style="left:220px;top:423px;width:25px;height:11px;background:#d0321e"></div><div class="t" style="left:220px;width:25px;text-align:center;top:423.96px;font-size:9.5px;line-height:9.5px;color:#ffd8c8;font-weight:400;">Qt</div><div class="t" style="left:249px;top:424.11px;font-size:10.5px;line-height:10.5px;color:#000;font-weight:400;">A4</div><div class="t" style="left:299px;top:424.11px;font-size:10.5px;line-height:10.5px;color:#000;font-weight:400;">Temperature</div><div class="r" style="left:219px;top:438px;width:267px;height:19px;background:#0078d7"></div><div class="r" style="left:295px;top:438px;width:1px;height:19px;background:#fff"></div><div class="r" style="left:220px;top:442px;width:25px;height:11px;background:#c2524c"></div><div class="t" style="left:220px;width:25px;text-align:center;top:442.96px;font-size:9.5px;line-height:9.5px;color:#fff;font-weight:400;">gr1a</div><div class="t" style="left:249px;top:443.11px;font-size:10.5px;line-height:10.5px;color:#fff;font-weight:400;">A5</div><div class="t" style="left:299px;top:443.11px;font-size:10.5px;line-height:10.5px;color:#fff;font-weight:400;">gr1a</div><div class="r" style="left:220px;top:461px;width:25px;height:11px;background:#c2524c"></div><div class="t" style="left:220px;width:25px;text-align:center;top:461.96px;font-size:9.5px;line-height:9.5px;color:#f4e0e0;font-weight:400;">gr2</div><div class="t" style="left:249px;top:462.11px;font-size:10.5px;line-height:10.5px;color:#000;font-weight:400;">A6</div><div class="t" style="left:299px;top:462.11px;font-size:10.5px;line-height:10.5px;color:#000;font-weight:400;">gr2</div><svg style="left:495px;top:383px" width="98" height="16"><polygon points="0,0 88,0 98,9 98,16 0,16" fill="#dce6f4"/><path d="M97.5 9V16" stroke="#b0b0f0"/></svg><div class="t" style="left:497px;top:385.69px;font-size:11px;line-height:11px;color:#22426e;font-weight:400;">Action No.</div><div class="r" style="left:495px;top:399px;width:98px;height:30px;background:#eef2f9;border-right:1px solid #b4b4ee;border-bottom:1px solid #b4b4ee"></div><div class="r" style="left:498px;top:403px;width:45px;height:20px;background:#fff;border:1px solid #c4c4c4"></div><div class="t" style="left:239px;width:300px;text-align:right;top:408.11px;font-size:10.5px;line-height:10.5px;color:#6d6d6d;font-weight:400;">5</div><svg style="left:600px;top:383px" width="389" height="16"><polygon points="0,0 379,0 389,9 389,16 0,16" fill="#dce6f4"/><path d="M388.5 9V16" stroke="#b0b0f0"/></svg><div class="t" style="left:602px;top:385.69px;font-size:11px;line-height:11px;color:#22426e;font-weight:400;">Action Description</div><div class="r" style="left:600px;top:399px;width:389px;height:30px;background:#eef2f9;border-right:1px solid #b4b4ee;border-bottom:1px solid #b4b4ee"></div><div class="r" style="left:603px;top:403px;width:381px;height:20px;background:#fff;border:1px solid #7a7a7a"></div><div class="t" style="left:608px;top:408.11px;font-size:10.5px;line-height:10.5px;color:#000;font-weight:400;">gr1a</div><svg style="left:969px;top:409px" width="12" height="8"><path d="M1.5 1.5L6 6L10.5 1.5" stroke="#404040" stroke-width="1.2" fill="none"/></svg><div class="r" style="left:996px;top:383px;width:162px;height:46px;background:#eef2f9;border:1px solid #c6cff0;border-right-color:#b4b4ee;border-bottom-color:#b4b4ee"></div><div class="r" style="left:495px;top:457px;width:663px;height:450px;background:#fff;border:1px solid #d9d9d9;border-left-color:#a8a8a8"></div><div class="r" style="left:497px;top:439px;width:48px;height:19px;background:#f0f0f0;border:1px solid #d9d9d9"></div><div class="clip" style="left:497px;top:439px;width:47px;height:19px"><div class="t" style="left:6px;top:5.11px;font-size:10.5px;line-height:10.5px;color:#000;font-weight:400;">General</div></div><div class="r" style="left:544px;top:437px;width:91px;height:21px;background:#fff;border:1px solid #d9d9d9;border-bottom:none"></div><div class="t" style="left:544px;width:91px;text-align:center;top:442.11px;font-size:10.5px;line-height:10.5px;color:#000;font-weight:400;">Details for gr1a</div><svg style="left:499px;top:467px" width="649" height="15"><polygon points="0,0 638,0 649,10 649,15 0,15" fill="#dce6f4"/><path d="M648.5 10V15" stroke="#b0b0f0"/></svg><div class="t" style="left:501px;top:468.69px;font-size:11px;line-height:11px;color:#22426e;font-weight:400;">Details for gr1a</div><div class="r" style="left:500px;top:482px;width:646px;height:420px;background:#e7eced"></div><div class="r" style="left:500px;top:482px;width:646px;height:34px;background:#f0f0f0"></div><div class="t" style="left:500px;width:101px;text-align:center;top:485.11px;font-size:10.5px;line-height:10.5px;color:#000;font-weight:400;">Division into notional</div><div class="t" style="left:500px;width:101px;text-align:center;top:501.11px;font-size:10.5px;line-height:10.5px;color:#000;font-weight:400;">lanes No.</div><div class="t" style="left:601px;width:413px;text-align:center;top:501.11px;font-size:10.5px;line-height:10.5px;color:#000;font-weight:400;">Description</div><div class="t" style="left:1014px;width:132px;text-align:center;top:501.11px;font-size:10.5px;line-height:10.5px;color:#000;font-weight:400;">Load Cases</div><div class="r" style="left:500px;top:515px;width:101px;height:16px;background:#dadada"></div><div class="r" style="left:601px;top:515px;width:545px;height:16px;background:#efefef"></div><div class="t" style="left:500px;width:101px;text-align:center;top:519.11px;font-size:10.5px;line-height:10.5px;color:#000;font-weight:400;">1</div><div class="r" style="left:500px;top:531px;width:101px;height:16px;background:#f0f0f0"></div><div class="r" style="left:601px;top:531px;width:545px;height:16px;background:#fff"></div><div class="t" style="left:500px;width:101px;text-align:center;top:535.11px;font-size:10.5px;line-height:10.5px;color:#000;font-weight:400;">2</div><div class="r" style="left:500px;top:547px;width:101px;height:16px;background:#f0f0f0"></div><div class="r" style="left:601px;top:547px;width:545px;height:16px;background:#fff"></div><div class="t" style="left:500px;width:101px;text-align:center;top:551.11px;font-size:10.5px;line-height:10.5px;color:#000;font-weight:400;">3</div><div class="r" style="left:500px;top:563px;width:101px;height:16px;background:#f0f0f0"></div><div class="r" style="left:601px;top:563px;width:545px;height:16px;background:#fff"></div><div class="t" style="left:500px;width:101px;text-align:center;top:567.11px;font-size:10.5px;line-height:10.5px;color:#000;font-weight:400;">4</div><div class="r" style="left:500px;top:579px;width:101px;height:16px;background:#f0f0f0"></div><div class="r" style="left:601px;top:579px;width:545px;height:16px;background:#fff"></div><div class="t" style="left:500px;width:101px;text-align:center;top:583.11px;font-size:10.5px;line-height:10.5px;color:#000;font-weight:400;">5</div><div class="r" style="left:500px;top:595px;width:101px;height:16px;background:#f0f0f0"></div><div class="r" style="left:601px;top:595px;width:545px;height:16px;background:#fff"></div><div class="t" style="left:500px;width:101px;text-align:center;top:599.11px;font-size:10.5px;line-height:10.5px;color:#000;font-weight:400;">6</div><div class="r" style="left:500px;top:611px;width:101px;height:16px;background:#f0f0f0"></div><div class="r" style="left:601px;top:611px;width:545px;height:16px;background:#fff"></div><div class="t" style="left:500px;width:101px;text-align:center;top:615.11px;font-size:10.5px;line-height:10.5px;color:#000;font-weight:400;">7</div><div class="r" style="left:500px;top:627px;width:101px;height:16px;background:#f0f0f0"></div><div class="r" style="left:601px;top:627px;width:545px;height:16px;background:#fff"></div><div class="t" style="left:500px;width:101px;text-align:center;top:631.11px;font-size:10.5px;line-height:10.5px;color:#000;font-weight:400;">8</div><div class="r" style="left:500px;top:643px;width:101px;height:16px;background:#f0f0f0"></div><div class="r" style="left:601px;top:643px;width:545px;height:16px;background:#fff"></div><div class="t" style="left:500px;width:101px;text-align:center;top:647.11px;font-size:10.5px;line-height:10.5px;color:#000;font-weight:400;">9</div><div class="r" style="left:500px;top:659px;width:101px;height:16px;background:#f0f0f0"></div><div class="r" style="left:601px;top:659px;width:545px;height:16px;background:#fff"></div><div class="t" style="left:500px;width:101px;text-align:center;top:663.11px;font-size:10.5px;line-height:10.5px;color:#000;font-weight:400;">10</div><div class="r" style="left:500px;top:675px;width:101px;height:16px;background:#f0f0f0"></div><div class="r" style="left:601px;top:675px;width:545px;height:16px;background:#fff"></div><div class="t" style="left:500px;width:101px;text-align:center;top:679.11px;font-size:10.5px;line-height:10.5px;color:#000;font-weight:400;">11</div><div class="r" style="left:500px;top:691px;width:101px;height:16px;background:#f0f0f0"></div><div class="r" style="left:601px;top:691px;width:545px;height:16px;background:#fff"></div><div class="t" style="left:500px;width:101px;text-align:center;top:695.11px;font-size:10.5px;line-height:10.5px;color:#000;font-weight:400;">12</div><div class="r" style="left:500px;top:707px;width:101px;height:16px;background:#f0f0f0"></div><div class="r" style="left:601px;top:707px;width:545px;height:16px;background:#fff"></div><div class="t" style="left:500px;width:101px;text-align:center;top:711.11px;font-size:10.5px;line-height:10.5px;color:#000;font-weight:400;">13</div><div class="r" style="left:500px;top:723px;width:101px;height:16px;background:#f0f0f0"></div><div class="r" style="left:601px;top:723px;width:545px;height:16px;background:#fff"></div><div class="t" style="left:500px;width:101px;text-align:center;top:727.11px;font-size:10.5px;line-height:10.5px;color:#000;font-weight:400;">14</div><div class="r" style="left:500px;top:739px;width:101px;height:16px;background:#f0f0f0"></div><div class="r" style="left:601px;top:739px;width:545px;height:16px;background:#fff"></div><div class="t" style="left:500px;width:101px;text-align:center;top:743.11px;font-size:10.5px;line-height:10.5px;color:#000;font-weight:400;">15</div><div class="r" style="left:500px;top:755px;width:101px;height:16px;background:#f0f0f0"></div><div class="r" style="left:601px;top:755px;width:545px;height:16px;background:#fff"></div><div class="t" style="left:500px;width:101px;text-align:center;top:759.11px;font-size:10.5px;line-height:10.5px;color:#000;font-weight:400;">16</div><div class="r" style="left:500px;top:771px;width:101px;height:16px;background:#f0f0f0"></div><div class="r" style="left:601px;top:771px;width:545px;height:16px;background:#fff"></div><div class="t" style="left:500px;width:101px;text-align:center;top:775.11px;font-size:10.5px;line-height:10.5px;color:#000;font-weight:400;">17</div><div class="r" style="left:500px;top:787px;width:101px;height:16px;background:#f0f0f0"></div><div class="r" style="left:601px;top:787px;width:545px;height:16px;background:#fff"></div><div class="t" style="left:500px;width:101px;text-align:center;top:791.11px;font-size:10.5px;line-height:10.5px;color:#000;font-weight:400;">18</div><div class="r" style="left:500px;top:803px;width:101px;height:16px;background:#f0f0f0"></div><div class="r" style="left:601px;top:803px;width:545px;height:16px;background:#fff"></div><div class="t" style="left:500px;width:101px;text-align:center;top:807.11px;font-size:10.5px;line-height:10.5px;color:#000;font-weight:400;">19</div><div class="r" style="left:500px;top:819px;width:101px;height:16px;background:#f0f0f0"></div><div class="r" style="left:601px;top:819px;width:545px;height:16px;background:#fff"></div><div class="t" style="left:500px;width:101px;text-align:center;top:823.11px;font-size:10.5px;line-height:10.5px;color:#000;font-weight:400;">20</div><div class="r" style="left:500px;top:515px;width:646px;height:1px;background:#a0a0a0"></div><div class="r" style="left:500px;top:531px;width:646px;height:1px;background:#a0a0a0"></div><div class="r" style="left:500px;top:547px;width:646px;height:1px;background:#a0a0a0"></div><div class="r" style="left:500px;top:563px;width:646px;height:1px;background:#a0a0a0"></div><div class="r" style="left:500px;top:579px;width:646px;height:1px;background:#a0a0a0"></div><div class="r" style="left:500px;top:595px;width:646px;height:1px;background:#a0a0a0"></div><div class="r" style="left:500px;top:611px;width:646px;height:1px;background:#a0a0a0"></div><div class="r" style="left:500px;top:627px;width:646px;height:1px;background:#a0a0a0"></div><div class="r" style="left:500px;top:643px;width:646px;height:1px;background:#a0a0a0"></div><div class="r" style="left:500px;top:659px;width:646px;height:1px;background:#a0a0a0"></div><div class="r" style="left:500px;top:675px;width:646px;height:1px;background:#a0a0a0"></div><div class="r" style="left:500px;top:691px;width:646px;height:1px;background:#a0a0a0"></div><div class="r" style="left:500px;top:707px;width:646px;height:1px;background:#a0a0a0"></div><div class="r" style="left:500px;top:723px;width:646px;height:1px;background:#a0a0a0"></div><div class="r" style="left:500px;top:739px;width:646px;height:1px;background:#a0a0a0"></div><div class="r" style="left:500px;top:755px;width:646px;height:1px;background:#a0a0a0"></div><div class="r" style="left:500px;top:771px;width:646px;height:1px;background:#a0a0a0"></div><div class="r" style="left:500px;top:787px;width:646px;height:1px;background:#a0a0a0"></div><div class="r" style="left:500px;top:803px;width:646px;height:1px;background:#a0a0a0"></div><div class="r" style="left:500px;top:819px;width:646px;height:1px;background:#a0a0a0"></div><div class="r" style="left:500px;top:835px;width:646px;height:1px;background:#a0a0a0"></div><div class="r" style="left:500px;top:482px;width:646px;height:1px;background:#a0a0a0"></div><div class="r" style="left:500px;top:482px;width:1px;height:420px;background:#a0a0a0"></div><div class="r" style="left:601px;top:482px;width:1px;height:420px;background:#a0a0a0"></div><div class="r" style="left:1014px;top:482px;width:1px;height:354px;background:#a0a0a0"></div><div class="r" style="left:1014px;top:836px;width:1px;height:70px;background:#a0a0a0"></div><div class="t" style="left:606px;top:519.11px;font-size:10.5px;line-height:10.5px;color:#000;font-weight:400;">Notional Lane 1 left</div><div class="t" style="left:606px;top:535.11px;font-size:10.5px;line-height:10.5px;color:#000;font-weight:400;">Notional Lane 1 right</div><div class="r" style="left:1015px;top:516px;width:131px;height:16px;border:2px solid #1a1a1a;background:#fff"></div><div class="clip" style="left:1017px;top:518px;width:117px;height:12px"><div class="t" style="left:0px;top:1.11px;font-size:10.5px;line-height:10.5px;color:#000;font-weight:400;">LC51, LC52, LC53, LC54, LC55</div></div><div class="r" style="left:1134px;top:518px;width:11px;height:12px;background:#e8e8e8;border-left:1px solid #c8c8c8"></div><div class="t" style="left:1135px;top:519.11px;font-size:10.5px;line-height:10.5px;color:#000;font-weight:400;">..</div><div class="t" style="left:1019px;top:535.11px;font-size:10.5px;line-height:10.5px;color:#000;font-weight:400;">LC20, LC21, LC60, LC61,</div><div class="r" style="left:538px;top:431px;width:101px;height:32px;border:3px solid #e2403a"></div><div class="r" style="left:638px;top:553px;width:333px;height:328px;background:#f0f0f0;box-shadow:2px 4px 18px 5px rgba(0,0,0,0.28)"></div><div class="r" style="left:640px;top:555px;width:329px;height:24px;background:#fff"></div><div class="t" style="left:642px;top:560.52px;font-size:11.2px;line-height:11.2px;color:#000;font-weight:400;">Select Load Case</div><svg style="left:949px;top:560px" width="12" height="12"><path d="M1 1L11 11M11 1L1 11" stroke="#000" stroke-width="1.1"/></svg><svg style="left:648px;top:587px" width="315" height="16"><polygon points="0,0 305,0 315,9 315,16 0,16" fill="#dce6f4"/><path d="M314.5 9V16" stroke="#b0b0f0"/></svg><div class="t" style="left:650px;top:589.69px;font-size:11px;line-height:11px;color:#22426e;font-weight:400;">Load Cases for Selection</div><div class="r" style="left:962px;top:596px;width:1px;height:235px;background:#b4b4ee"></div><div class="r" style="left:648px;top:603px;width:315px;height:228px;background:#fff;border-left:1px solid #a0a0a0;border-top:1px solid #a0a0a0;border-bottom:1px solid #b4b4ee"></div><div class="r" style="left:649px;top:604px;width:294px;height:152px;background:#0078d7"></div><div class="r" style="left:697px;top:604px;width:1px;height:152px;background:#fff"></div><div class="r" style="left:697px;top:756px;width:1px;height:70px;background:#000"></div><div class="t" style="left:653px;top:609.11px;font-size:10.5px;line-height:10.5px;color:#fff;font-weight:400;">LC10</div><div class="clip" style="left:698px;top:604px;width:244px;height:19px"><div class="t" style="left:4px;top:4.94px;font-size:10.7px;line-height:10.7px;color:#fff;font-weight:400;">UDL - NL 1 - 1</div></div><div class="t" style="left:653px;top:628.11px;font-size:10.5px;line-height:10.5px;color:#fff;font-weight:400;">LC11</div><div class="clip" style="left:698px;top:623px;width:244px;height:19px"><div class="t" style="left:4px;top:4.94px;font-size:10.7px;line-height:10.7px;color:#fff;font-weight:400;">UDL - NL 1 - 2</div></div><div class="t" style="left:653px;top:647.11px;font-size:10.5px;line-height:10.5px;color:#fff;font-weight:400;">LC50</div><div class="clip" style="left:698px;top:642px;width:244px;height:19px"><div class="t" style="left:4px;top:4.94px;font-size:10.7px;line-height:10.7px;color:#fff;font-weight:400;">Step 1/3 Movement Sets 1 from RF-MOVE-Surfac</div></div><div class="t" style="left:653px;top:666.11px;font-size:10.5px;line-height:10.5px;color:#fff;font-weight:400;">LC51</div><div class="clip" style="left:698px;top:661px;width:244px;height:19px"><div class="t" style="left:4px;top:4.94px;font-size:10.7px;line-height:10.7px;color:#fff;font-weight:400;">Step 2/3 Movement Sets 1 from RF-MOVE-Surfac</div></div><div class="t" style="left:653px;top:685.11px;font-size:10.5px;line-height:10.5px;color:#fff;font-weight:400;">LC52</div><div class="clip" style="left:698px;top:680px;width:244px;height:19px"><div class="t" style="left:4px;top:4.94px;font-size:10.7px;line-height:10.7px;color:#fff;font-weight:400;">Step 3/3 Movement Sets 1 from RF-MOVE-Surfac</div></div><div class="t" style="left:653px;top:704.11px;font-size:10.5px;line-height:10.5px;color:#fff;font-weight:400;">LC53</div><div class="clip" style="left:698px;top:699px;width:244px;height:19px"><div class="t" style="left:4px;top:4.94px;font-size:10.7px;line-height:10.7px;color:#fff;font-weight:400;">Step 1/3 Movement Sets 2 from RF-MOVE-Surfac</div></div><div class="t" style="left:653px;top:723.11px;font-size:10.5px;line-height:10.5px;color:#fff;font-weight:400;">LC54</div><div class="clip" style="left:698px;top:718px;width:244px;height:19px"><div class="t" style="left:4px;top:4.94px;font-size:10.7px;line-height:10.7px;color:#fff;font-weight:400;">Step 2/3 Movement Sets 2 from RF-MOVE-Surfac</div></div><div class="t" style="left:653px;top:742.11px;font-size:10.5px;line-height:10.5px;color:#fff;font-weight:400;">LC55</div><div class="clip" style="left:698px;top:737px;width:244px;height:19px"><div class="t" style="left:4px;top:4.94px;font-size:10.7px;line-height:10.7px;color:#fff;font-weight:400;">Step 3/3 Movement Sets 2 from RF-MOVE-Surfac</div></div><div class="r" style="left:943px;top:604px;width:19px;height:224px;background:#f0f0f0;border-left:1px solid #fff"></div><div class="r" style="left:944px;top:604px;width:17px;height:16px;background:#f0f0f0;border:1px solid #fff;border-right-color:#696969;border-bottom-color:#696969;box-shadow:inset -1px -1px 0 #a0a0a0"></div><svg style="left:948px;top:608px" width="9" height="6"><polygon points="0.5,5 4.5,1 8.5,5" fill="#000"/></svg><div class="r" style="left:944px;top:621px;width:17px;height:189px;background:#f0f0f0;border:1px solid #fff;border-right-color:#696969;border-bottom-color:#696969;box-shadow:inset -1px -1px 0 #a0a0a0"></div><div class="r" style="left:944px;top:811px;width:17px;height:17px;background:#f0f0f0;border:1px solid #fff;border-right-color:#696969;border-bottom-color:#696969;box-shadow:inset -1px -1px 0 #a0a0a0"></div><svg style="left:948px;top:817px" width="9" height="6"><polygon points="0.5,1 4.5,5 8.5,1" fill="#000"/></svg><div class="r" style="left:648px;top:839px;width:314px;height:1px;background:#a0a0a0"></div><div class="r" style="left:648px;top:840px;width:314px;height:1px;background:#fff"></div><div class="r" style="left:649px;top:851px;width:25px;height:21px;background:#e1e1e1;border:1px solid #adadad"></div><svg style="left:652px;top:852px" width="20" height="19"><defs><radialGradient id="hb" cx="0.4" cy="0.35" r="0.7"><stop offset="0" stop-color="#fff"/><stop offset="0.7" stop-color="#f4f4f4"/><stop offset="1" stop-color="#b8b8b8"/></radialGradient></defs><path d="M4.5 13.5L3 17.5L8 14.5" fill="#f0f0f0" stroke="#9a9a9a" stroke-width="0.8"/><circle cx="9" cy="8" r="7" fill="url(#hb)" stroke="#a8a8a8" stroke-width="0.8"/><text x="9.5" y="12.5" font-family="Liberation Serif" font-size="13" font-style="italic" font-weight="700" fill="#3048a8" text-anchor="middle">?</text></svg><div class="r" style="left:806px;top:851px;width:73px;height:21px;background:#e1e1e1;border:2px solid #0078d7"></div><div class="t" style="left:806px;width:73px;text-align:center;top:857.11px;font-size:10.5px;line-height:10.5px;color:#000;font-weight:400;">OK</div><div class="r" style="left:889px;top:851px;width:73px;height:21px;background:#e1e1e1;border:1px solid #adadad"></div><div class="t" style="left:889px;width:73px;text-align:center;top:857.11px;font-size:10.5px;line-height:10.5px;color:#000;font-weight:400;">Cancel</div><div class="r" style="left:637px;top:552px;width:335px;height:331px;border:3px solid #e2403a"></div><svg style="left:0;top:0" width="1200" height="900"><path d="M1134 526L980 639" stroke="#e2403a" stroke-width="5" stroke-linecap="square"/><polygon points="968,647 976,628 989,645" fill="#e2403a"/></svg>
</body></html>
